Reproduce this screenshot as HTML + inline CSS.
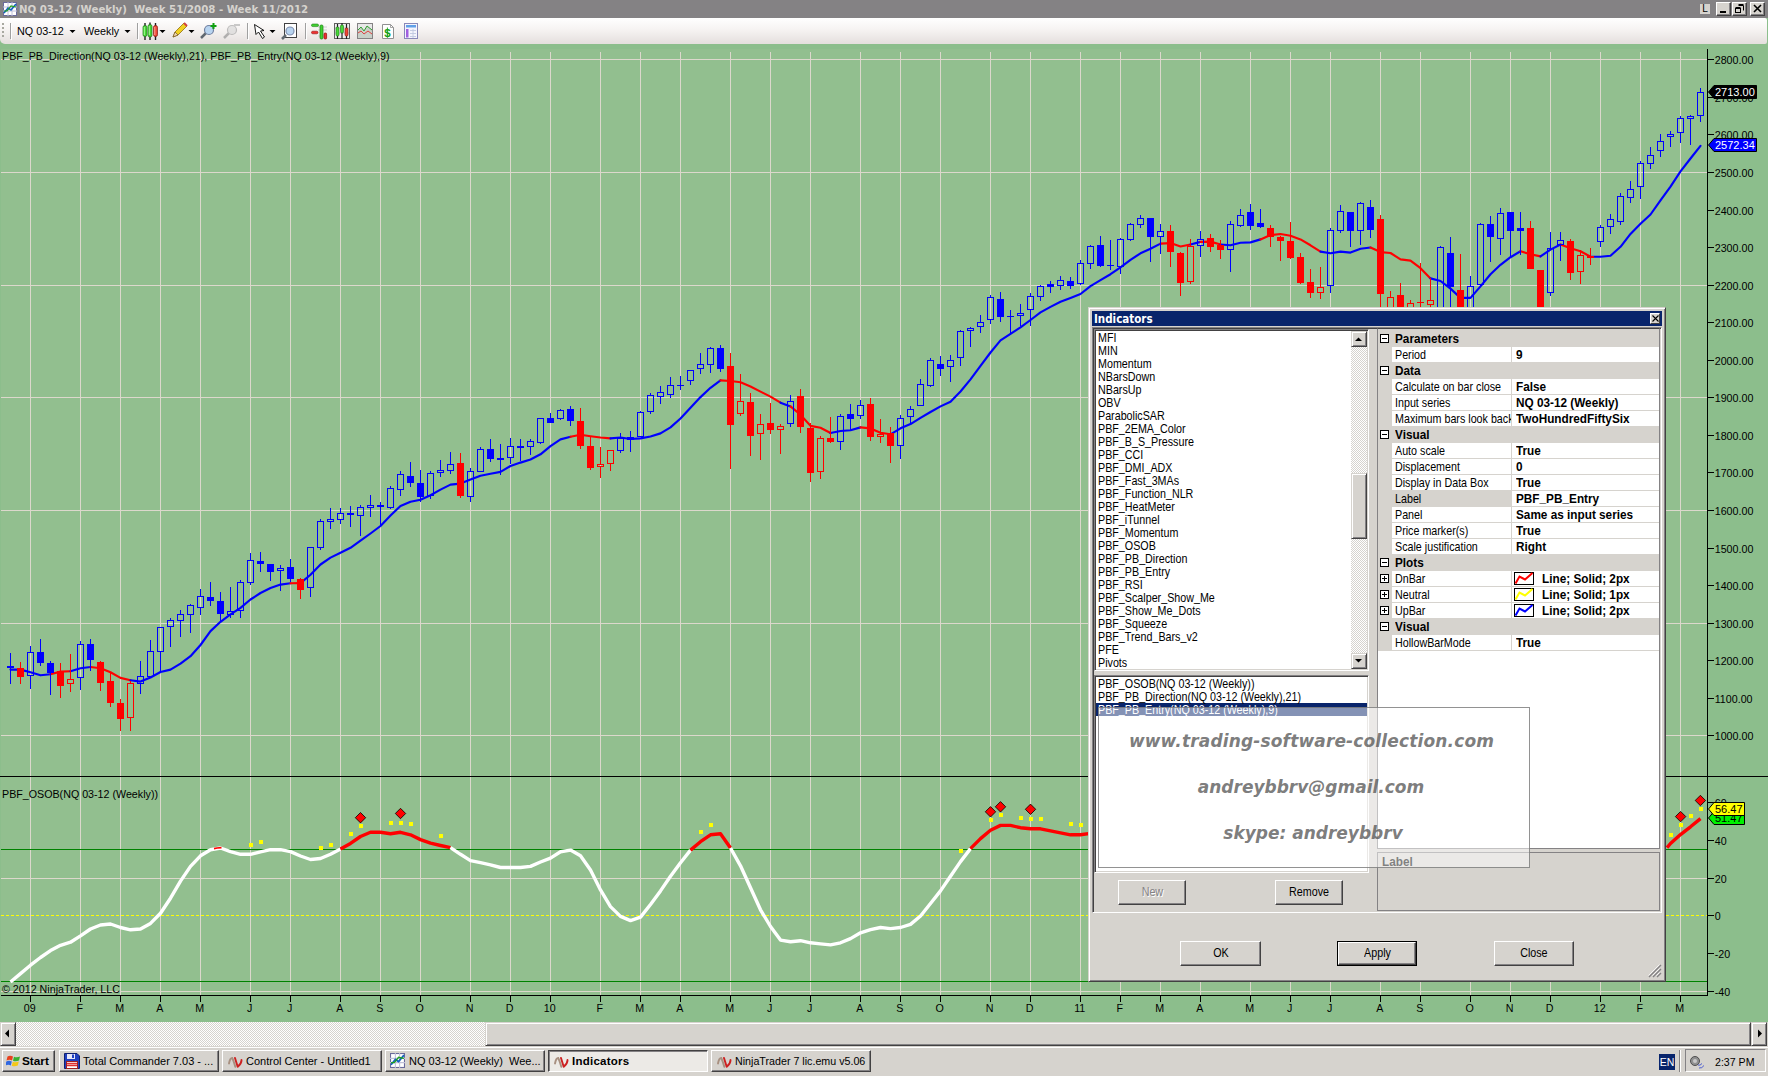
<!DOCTYPE html>
<html><head><meta charset="utf-8"><title>NQ 03-12 (Weekly)</title>
<style>
*{box-sizing:border-box;margin:0;padding:0}
html,body{width:1768px;height:1076px;overflow:hidden;background:#8cbe8c;font-family:"Liberation Sans",sans-serif;font-size:11px;color:#000}
.abs{position:absolute}
#title{left:0;top:0;width:1768px;height:18px;background:#848284}
#title .t{left:19px;top:2px;font:bold 11.35px "DejaVu Sans Condensed","DejaVu Sans","Liberation Sans",sans-serif;color:#d6d3ce;white-space:pre;line-height:15px}
#toolbar{left:0;top:18px;width:1767px;height:26px;background:linear-gradient(#ffffff 0%,#f6f3f2 45%,#e4dfdd 100%);border-radius:0 2px 2px 5px;}
#chartbg{left:1px;top:49px;width:1706px;height:946px;background:#92bf8f}
.btn3d{background:#d6d3ce;border:1px solid;border-color:#fff #424142 #424142 #fff;box-shadow:inset -1px -1px 0 #848284, inset 1px 1px 0 #d6d3ce}
.sb3d{background:#d6d3ce;border:1px solid;border-color:#d6d3ce #424142 #424142 #d6d3ce;box-shadow:inset 1px 1px 0 #fff, inset -1px -1px 0 #848284}
.chk{background:conic-gradient(#fff 25%,#d6d3ce 0 50%,#fff 0 75%,#d6d3ce 0) 0 0/2px 2px}
#scroll{left:0;top:1022px;width:1768px;height:25px;background:#d6d3ce}
#taskbar{left:0;top:1047px;width:1768px;height:29px;background:#d6d3ce;border-top:1px solid #fff}
.tb{position:absolute;top:2px;height:22px;white-space:pre;background:#d6d3ce;border:1px solid;border-color:#fff #424142 #424142 #fff;box-shadow:inset -1px -1px 0 #848284;font:11px "Liberation Sans",sans-serif;line-height:20px;overflow:hidden;padding-left:23px}
.tb.act{border-color:#424142 #fff #fff #424142;box-shadow:inset 1px 1px 0 #848284;background:#eceae6;font-weight:bold}
</style></head><body>
<style>
.lst{font:12.4px "Liberation Sans",sans-serif;line-height:13px;white-space:nowrap;transform:scaleX(0.865);transform-origin:0 0}
.lst div{height:13px}
.pg{font:12.4px "Liberation Sans",sans-serif;line-height:17px;white-space:nowrap;transform:scaleX(0.865);transform-origin:0 0}
.pg.b,.b{font-weight:bold;transform:scaleX(0.95);transform-origin:0 0}
.u{position:relative;top:-1px}
.wm{font:italic bold 17px "DejaVu Sans","Liberation Sans",sans-serif;color:rgba(90,90,90,0.8);text-align:center;white-space:nowrap;line-height:22px}
</style><div id="title" class="abs">
<svg class="abs" style="left:3px;top:2px" width="14" height="14" viewBox="0 0 14 14"><rect x="0.5" y="0.5" width="13" height="13" fill="#fff" stroke="#6a6a9a"/><path d="M0 5H14M0 9H14M5 0V14M9 0V14" stroke="#c0c0d8" stroke-width="1"/><path d="M1 11L5 6L8 8L13 2" stroke="#1060c0" stroke-width="1.6" fill="none"/><path d="M1 9L4 9L8 4L13 5" stroke="#20a020" stroke-width="1.2" fill="none"/></svg>
<div class="abs t">NQ 03-12 (Weekly)  Week 51/2008 - Week 11/2012</div>
<div class="abs" style="left:1700px;top:4px;width:10px;height:10px;background:#d6d3ce;font:10px 'Liberation Sans',sans-serif;line-height:10px;text-align:center">L</div>
<div class="abs btn3d" style="left:1716px;top:2px;width:15px;height:14px"><div class="abs" style="left:3px;top:8px;width:6px;height:2px;background:#000"></div></div>
<div class="abs btn3d" style="left:1732px;top:2px;width:15px;height:14px"><svg class="abs" style="left:1px;top:0px" width="11" height="11" viewBox="0 0 11 11"><path d="M4.5 2.5H9.5V7.5M4.5 1.5H9.5" stroke="#000" fill="none"/><rect x="1.5" y="5.5" width="5" height="4" fill="none" stroke="#000"/><path d="M1.5 4.5H6.5" stroke="#000"/></svg></div>
<div class="abs btn3d" style="left:1750px;top:2px;width:15px;height:14px"><svg class="abs" style="left:2px;top:1px" width="9" height="9" viewBox="0 0 9 9"><path d="M1 1L8 8M8 1L1 8" stroke="#000" stroke-width="1.6"/></svg></div>
</div>
<div id="toolbar" class="abs">
<svg class="abs" style="left:0;top:0" width="430" height="26" viewBox="0 18 430 26" font-family="Liberation Sans, sans-serif" font-size="11px">
<g fill="#a8a8a0"><rect x="2" y="23" width="2" height="2"/><rect x="2" y="27" width="2" height="2"/><rect x="2" y="31" width="2" height="2"/><rect x="2" y="35" width="2" height="2"/></g>
<g fill="#a0a0a0"><rect x="10" y="23" width="1" height="16"/><rect x="137" y="23" width="1" height="16"/><rect x="247" y="23" width="1" height="16"/><rect x="305" y="23" width="1" height="16"/></g><g fill="#ffffff"><rect x="11" y="24" width="1" height="16"/><rect x="138" y="24" width="1" height="16"/><rect x="248" y="24" width="1" height="16"/><rect x="306" y="24" width="1" height="16"/></g>
<text x="17" y="35" font-size="10.8px">NQ 03-12</text>
<path d="M69.5 30H75.5L72.5 33Z" fill="#000"/>
<text x="84" y="35" font-size="10.8px">Weekly</text>
<path d="M124.500 30H130.500L127.500 33Z" fill="#000"/>
<!-- candles icon -->
<g><path d="M145 23V40M150 22.500V40M155.500 23V40" stroke="#202020" stroke-width="1.400"/><rect x="143" y="25.500" width="4" height="11" rx="1.800" fill="#48d838" stroke="#207018" stroke-width="0.700"/><rect x="148" y="24.500" width="4" height="12.500" rx="1.800" fill="#48d838" stroke="#207018" stroke-width="0.700"/><rect x="153.500" y="25.500" width="4" height="11" rx="1.800" fill="#f04838" stroke="#801810" stroke-width="0.700"/><path d="M144.300 27V35M149.300 26V35" stroke="#b0ffa0" stroke-width="0.900"/><path d="M154.800 27V35" stroke="#ffb0a0" stroke-width="0.900"/></g>
<path d="M159.500 30H165.500L162.500 33Z" fill="#000"/>
<!-- pencil -->
<g><path d="M173 37L175 32L184 23L187 26L178 35Z" fill="#f0d020" stroke="#907010" stroke-width="0.8"/><path d="M173 37L175 32L178 35Z" fill="#f0d8b0" stroke="#604010" stroke-width="0.6"/><path d="M184 23L187 26" stroke="#d04040" stroke-width="2"/></g>
<path d="M188.500 30H194.500L191.500 33Z" fill="#000"/>
<!-- zoom + -->
<g><path d="M201 38L206 33" stroke="#606870" stroke-width="2.500"/><circle cx="209" cy="30" r="4.500" fill="#b8d4f0" stroke="#7080a0" stroke-width="1.200"/><path d="M213.500 23V29M210.500 26H216.500" stroke="#10a010" stroke-width="2"/></g>
<!-- zoom - grey -->
<g opacity="0.65"><path d="M224 38L229 33" stroke="#909090" stroke-width="2.500"/><circle cx="232" cy="30" r="4.500" fill="#d8d8d8" stroke="#a0a0a0" stroke-width="1.200"/><path d="M234 25H240" stroke="#b0b0b0" stroke-width="2"/></g>
<!-- cursor -->
<path d="M254.500 24.500L256 34.500L258.500 32L262.500 38.500L264.500 37L260.500 31L264 30.500Z" fill="#fff" stroke="#000" stroke-width="0.900" stroke-linejoin="miter"/>
<path d="M269.500 30H275.500L272.500 33Z" fill="#000"/>
<!-- magnifier box -->
<g><rect x="284.500" y="23.500" width="12" height="14" fill="#fff" stroke="#424142" stroke-width="1"/><path d="M282 39L286 35" stroke="#606870" stroke-width="2.500"/><circle cx="290" cy="31" r="4" fill="#b8d4f0" stroke="#8090b0" stroke-width="1.200"/></g>
<!-- red-green bars -->
<g><path d="M318 27H327M318 30H327M318 36H327" stroke="#d0d0d0" stroke-width="1"/><rect x="311.500" y="24" width="7" height="2.600" rx="1.300" fill="#40d030" stroke="#208018" stroke-width="0.600"/><rect x="311.500" y="31.200" width="6.500" height="2.600" rx="1.300" fill="#f03030" stroke="#901010" stroke-width="0.600"/><rect x="320" y="25" width="3" height="14" rx="1.200" fill="#40d030" stroke="#208018" stroke-width="0.700"/><rect x="324" y="33" width="2.600" height="6" rx="1" fill="#f03030" stroke="#901010" stroke-width="0.700"/></g>
<!-- candles in box -->
<g><rect x="334.500" y="23.500" width="15" height="15" fill="#f0f0f0" stroke="#606060"/><path d="M335 28H349M335 33H349" stroke="#c8c8c8"/><path d="M337.500 24V39M342 23V39M346.500 24V39" stroke="#202020" stroke-width="1.200"/><rect x="336" y="27" width="3" height="9" rx="1.200" fill="#48d838" stroke="#207018" stroke-width="0.600"/><rect x="340.500" y="25" width="3" height="8" rx="1.200" fill="#48d838" stroke="#207018" stroke-width="0.600"/><rect x="345" y="28" width="3" height="8" rx="1.200" fill="#f04838" stroke="#801810" stroke-width="0.600"/></g>
<!-- chart lines -->
<g><rect x="357.500" y="23.500" width="15" height="15" fill="#e8e8e8" stroke="#848284"/><path d="M358 38L358 30L361 27L364 31L367 26L372 30L372 38Z" fill="#c8d0c8"/><path d="M358 30L361 27L364 31L367 26L372 30" stroke="#30a030" fill="none"/><path d="M358 33L361 31L364 34L368 31L372 34" stroke="#e04040" fill="none"/></g>
<!-- $ sheet -->
<g><path d="M382.500 24.500H390.500L393.500 27.500V38.500H382.500Z" fill="#fff" stroke="#909090"/><path d="M390.500 24.500V27.500H393.500" fill="none" stroke="#909090" stroke-width="0.800"/><text x="384.200" y="36.500" font-family="Liberation Sans, sans-serif" font-size="11.500px" font-weight="bold" fill="#18a018">$</text><path d="M387.400 27.500V37.500" stroke="#18a018" stroke-width="0.900"/></g>
<!-- purple table -->
<g><rect x="404.500" y="23.500" width="13" height="15" fill="#f4f4fc" stroke="#8888b8"/><rect x="406" y="25" width="10" height="2.500" fill="#60a0e8"/><rect x="406" y="29" width="2.500" height="8.500" fill="#a060e0"/><path d="M410 30.500H416M410 33.500H416M410 36.500H416M413 29V38" stroke="#c0c8e0" stroke-width="0.900"/></g>
</svg>
</div>
<div id="chartbg" class="abs"></div>
<svg class="abs" style="left:0;top:0" width="1768" height="1076" viewBox="0 0 1768 1076">
<g shape-rendering="crispEdges"><rect x="30" y="52" width="1" height="943" fill="#dcd8cc"/><rect x="80" y="52" width="1" height="943" fill="#dcd8cc"/><rect x="120" y="52" width="1" height="943" fill="#dcd8cc"/><rect x="160" y="52" width="1" height="943" fill="#dcd8cc"/><rect x="200" y="52" width="1" height="943" fill="#dcd8cc"/><rect x="250" y="52" width="1" height="943" fill="#dcd8cc"/><rect x="290" y="52" width="1" height="943" fill="#dcd8cc"/><rect x="340" y="52" width="1" height="943" fill="#dcd8cc"/><rect x="380" y="52" width="1" height="943" fill="#dcd8cc"/><rect x="420" y="52" width="1" height="943" fill="#dcd8cc"/><rect x="470" y="52" width="1" height="943" fill="#dcd8cc"/><rect x="510" y="52" width="1" height="943" fill="#dcd8cc"/><rect x="550" y="52" width="1" height="943" fill="#dcd8cc"/><rect x="600" y="52" width="1" height="943" fill="#dcd8cc"/><rect x="640" y="52" width="1" height="943" fill="#dcd8cc"/><rect x="680" y="52" width="1" height="943" fill="#dcd8cc"/><rect x="730" y="52" width="1" height="943" fill="#dcd8cc"/><rect x="770" y="52" width="1" height="943" fill="#dcd8cc"/><rect x="810" y="52" width="1" height="943" fill="#dcd8cc"/><rect x="860" y="52" width="1" height="943" fill="#dcd8cc"/><rect x="900" y="52" width="1" height="943" fill="#dcd8cc"/><rect x="940" y="52" width="1" height="943" fill="#dcd8cc"/><rect x="990" y="52" width="1" height="943" fill="#dcd8cc"/><rect x="1030" y="52" width="1" height="943" fill="#dcd8cc"/><rect x="1080" y="52" width="1" height="943" fill="#dcd8cc"/><rect x="1120" y="52" width="1" height="943" fill="#dcd8cc"/><rect x="1160" y="52" width="1" height="943" fill="#dcd8cc"/><rect x="1200" y="52" width="1" height="943" fill="#dcd8cc"/><rect x="1250" y="52" width="1" height="943" fill="#dcd8cc"/><rect x="1290" y="52" width="1" height="943" fill="#dcd8cc"/><rect x="1330" y="52" width="1" height="943" fill="#dcd8cc"/><rect x="1380" y="52" width="1" height="943" fill="#dcd8cc"/><rect x="1420" y="52" width="1" height="943" fill="#dcd8cc"/><rect x="1470" y="52" width="1" height="943" fill="#dcd8cc"/><rect x="1510" y="52" width="1" height="943" fill="#dcd8cc"/><rect x="1550" y="52" width="1" height="943" fill="#dcd8cc"/><rect x="1600" y="52" width="1" height="943" fill="#dcd8cc"/><rect x="1640" y="52" width="1" height="943" fill="#dcd8cc"/><rect x="1680" y="52" width="1" height="943" fill="#dcd8cc"/><rect x="1" y="59" width="1706" height="1" fill="#dcd8cc"/><rect x="1" y="172" width="1706" height="1" fill="#dcd8cc"/><rect x="1" y="285" width="1706" height="1" fill="#dcd8cc"/><rect x="1" y="397" width="1706" height="1" fill="#dcd8cc"/><rect x="1" y="510" width="1706" height="1" fill="#dcd8cc"/><rect x="1" y="623" width="1706" height="1" fill="#dcd8cc"/><rect x="1" y="735" width="1706" height="1" fill="#dcd8cc"/><rect x="1" y="878" width="1706" height="1" fill="#dcd8cc"/><rect x="1" y="991" width="1706" height="1" fill="#dcd8cc"/></g>
<g shape-rendering="crispEdges"><rect x="1" y="849" width="1706" height="1" fill="#008200"/><rect x="1" y="981" width="1706" height="1" fill="#008200"/><line x1="1" y1="915.5" x2="1707" y2="915.5" stroke="#ffff00" stroke-width="1" stroke-dasharray="3,2"/></g>
<polyline points="10.5,669.6 20.5,669.6 30.5,672.3 40.5,675.3 50.5,674.2" fill="none" stroke="#0000ff" stroke-width="2.15" stroke-linejoin="round" stroke-linecap="round"/>
<polyline points="50.5,674.2 60.5,671.6 70.5,671.2" fill="none" stroke="#ff0000" stroke-width="2.15" stroke-linejoin="round" stroke-linecap="round"/>
<polyline points="70.5,671.2 80.5,668.3 90.5,667.0" fill="none" stroke="#0000ff" stroke-width="2.15" stroke-linejoin="round" stroke-linecap="round"/>
<polyline points="90.5,667.0 100.5,668.3 110.5,672.3 120.5,677.9 130.5,680.3" fill="none" stroke="#ff0000" stroke-width="2.15" stroke-linejoin="round" stroke-linecap="round"/>
<polyline points="130.5,680.3 140.5,681.6 150.5,677.5 160.5,672.0 170.5,669.6 180.5,663.6 190.5,656.2 200.5,645.0 210.5,631.1 220.5,621.8 230.5,614.3 240.5,607.8 250.5,599.5 260.5,593.0 270.5,588.0 280.5,584.6 290.5,583.3" fill="none" stroke="#0000ff" stroke-width="2.15" stroke-linejoin="round" stroke-linecap="round"/>
<polyline points="290.5,583.3 300.5,583.1" fill="none" stroke="#ff0000" stroke-width="2.15" stroke-linejoin="round" stroke-linecap="round"/>
<polyline points="300.5,583.1 310.5,574.7 320.5,564.5 330.5,557.6 340.5,552.8 350.5,547.8 360.5,540.7 370.5,533.5 380.5,526.0 390.5,515.6 400.5,505.9 410.5,501.7 420.5,499.8 430.5,495.2 440.5,489.6 450.5,484.6 460.5,483.6 470.5,479.6 480.5,475.8 490.5,473.8 500.5,471.9 510.5,466.0 520.5,462.6 530.5,459.5 540.5,454.3 550.5,446.1 560.5,439.4 570.5,436.8" fill="none" stroke="#0000ff" stroke-width="2.15" stroke-linejoin="round" stroke-linecap="round"/>
<polyline points="570.5,436.8 580.5,434.8 590.5,436.2 600.5,437.5 610.5,438.4" fill="none" stroke="#ff0000" stroke-width="2.15" stroke-linejoin="round" stroke-linecap="round"/>
<polyline points="610.5,438.4 620.5,437.5 630.5,439.0 640.5,438.4 650.5,436.5 660.5,433.4 670.5,427.4 680.5,418.5 690.5,407.7 700.5,397.1 710.5,387.8 720.5,380.4" fill="none" stroke="#0000ff" stroke-width="2.15" stroke-linejoin="round" stroke-linecap="round"/>
<polyline points="720.5,380.4 730.5,381.0 740.5,382.3 750.5,386.5 760.5,391.6 770.5,396.6 780.5,402.7" fill="none" stroke="#ff0000" stroke-width="2.15" stroke-linejoin="round" stroke-linecap="round"/>
<polyline points="780.5,402.7 790.5,406.4" fill="none" stroke="#0000ff" stroke-width="2.15" stroke-linejoin="round" stroke-linecap="round"/>
<polyline points="790.5,406.4 800.5,414.8 810.5,425.9 820.5,427.8 830.5,433.0" fill="none" stroke="#ff0000" stroke-width="2.15" stroke-linejoin="round" stroke-linecap="round"/>
<polyline points="830.5,433.0 840.5,431.0 850.5,430.2 860.5,427.4" fill="none" stroke="#0000ff" stroke-width="2.15" stroke-linejoin="round" stroke-linecap="round"/>
<polyline points="860.5,427.4 870.5,428.4 880.5,432.8 890.5,434.3" fill="none" stroke="#ff0000" stroke-width="2.15" stroke-linejoin="round" stroke-linecap="round"/>
<polyline points="890.5,434.3 900.5,428.3 910.5,424.1 920.5,417.9 930.5,412.0 940.5,406.4 950.5,401.7 960.5,391.5 970.5,379.4 980.5,365.9 990.5,352.5 1000.5,340.4 1010.5,333.9 1020.5,327.4 1030.5,320.0 1040.5,312.4 1050.5,306.9 1060.5,301.8 1070.5,297.9 1080.5,294.0 1090.5,286.1 1100.5,280.1 1110.5,274.2 1120.5,267.4 1130.5,259.8 1140.5,253.3 1150.5,248.7 1160.5,243.6" fill="none" stroke="#0000ff" stroke-width="2.15" stroke-linejoin="round" stroke-linecap="round"/>
<polyline points="1160.5,243.6 1170.5,243.1 1180.5,246.5 1190.5,244.5" fill="none" stroke="#ff0000" stroke-width="2.15" stroke-linejoin="round" stroke-linecap="round"/>
<polyline points="1190.5,244.5 1200.5,241.9" fill="none" stroke="#0000ff" stroke-width="2.15" stroke-linejoin="round" stroke-linecap="round"/>
<polyline points="1200.5,241.9 1210.5,241.6 1220.5,244.5" fill="none" stroke="#ff0000" stroke-width="2.15" stroke-linejoin="round" stroke-linecap="round"/>
<polyline points="1220.5,244.5 1230.5,245.3 1240.5,242.8 1250.5,242.4 1260.5,239.4" fill="none" stroke="#0000ff" stroke-width="2.15" stroke-linejoin="round" stroke-linecap="round"/>
<polyline points="1260.5,239.4 1270.5,235.1 1280.5,234.0 1290.5,235.7 1300.5,239.4 1310.5,245.3 1320.5,251.6" fill="none" stroke="#ff0000" stroke-width="2.15" stroke-linejoin="round" stroke-linecap="round"/>
<polyline points="1320.5,251.6 1330.5,253.3 1340.5,251.6 1350.5,252.6 1360.5,248.7 1370.5,247.5" fill="none" stroke="#0000ff" stroke-width="2.15" stroke-linejoin="round" stroke-linecap="round"/>
<polyline points="1370.5,247.5 1380.5,252.1 1390.5,253.0 1400.5,259.4 1410.5,260.6 1420.5,268.2 1430.5,278.4" fill="none" stroke="#ff0000" stroke-width="2.15" stroke-linejoin="round" stroke-linecap="round"/>
<polyline points="1430.5,278.4 1440.5,281.0 1450.5,288.6 1460.5,297.9 1470.5,297.9 1480.5,286.4 1490.5,274.2 1500.5,264.8 1510.5,257.2 1520.5,251.3" fill="none" stroke="#0000ff" stroke-width="2.15" stroke-linejoin="round" stroke-linecap="round"/>
<polyline points="1520.5,251.3 1530.5,254.3 1540.5,256.4" fill="none" stroke="#ff0000" stroke-width="2.15" stroke-linejoin="round" stroke-linecap="round"/>
<polyline points="1540.5,256.4 1550.5,249.6 1560.5,244.5" fill="none" stroke="#0000ff" stroke-width="2.15" stroke-linejoin="round" stroke-linecap="round"/>
<polyline points="1560.5,244.5 1570.5,248.2 1580.5,251.3 1590.5,256.7" fill="none" stroke="#ff0000" stroke-width="2.15" stroke-linejoin="round" stroke-linecap="round"/>
<polyline points="1590.5,256.7 1600.5,256.8 1610.5,255.7 1620.5,246.8 1630.5,233.9 1640.5,223.8 1650.5,214.5 1660.5,200.4 1670.5,186.6 1680.5,171.4 1690.5,158.5 1700.5,145.8" fill="none" stroke="#0000ff" stroke-width="2.15" stroke-linejoin="round" stroke-linecap="round"/>
<g shape-rendering="crispEdges"><rect x="10" y="653" width="1" height="31" fill="#0000ff"/><rect x="7" y="666" width="7" height="2" fill="#0000ff"/><rect x="20" y="662" width="1" height="22" fill="#ff0000"/><rect x="17" y="668" width="7" height="9" fill="#ff0000"/><rect x="30" y="646" width="1" height="6" fill="#0000ff"/><rect x="30" y="676" width="1" height="13" fill="#0000ff"/><rect x="27.5" y="652.5" width="6" height="23" fill="none" stroke="#0000ff" stroke-width="1"/><rect x="40" y="639" width="1" height="27" fill="#0000ff"/><rect x="37" y="652" width="7" height="11" fill="#0000ff"/><rect x="50" y="661" width="1" height="34" fill="#0000ff"/><rect x="47" y="663" width="7" height="10" fill="#0000ff"/><rect x="60" y="663" width="1" height="35" fill="#ff0000"/><rect x="57" y="671" width="7" height="15" fill="#ff0000"/><rect x="70" y="654" width="1" height="25" fill="#ff0000"/><rect x="70" y="684" width="1" height="8" fill="#ff0000"/><rect x="67.5" y="679.5" width="6" height="4" fill="none" stroke="#ff0000" stroke-width="1"/><rect x="80" y="641" width="1" height="3" fill="#0000ff"/><rect x="80" y="678" width="1" height="12" fill="#0000ff"/><rect x="77.5" y="644.5" width="6" height="33" fill="none" stroke="#0000ff" stroke-width="1"/><rect x="90" y="639" width="1" height="32" fill="#0000ff"/><rect x="87" y="644" width="7" height="16" fill="#0000ff"/><rect x="100" y="661" width="1" height="30" fill="#ff0000"/><rect x="97" y="662" width="7" height="21" fill="#ff0000"/><rect x="110" y="673" width="1" height="34" fill="#ff0000"/><rect x="107" y="681" width="7" height="22" fill="#ff0000"/><rect x="120" y="699" width="1" height="32" fill="#ff0000"/><rect x="117" y="703" width="7" height="16" fill="#ff0000"/><rect x="130" y="681" width="1" height="2" fill="#ff0000"/><rect x="130" y="718" width="1" height="13" fill="#ff0000"/><rect x="127.5" y="683.5" width="6" height="34" fill="none" stroke="#ff0000" stroke-width="1"/><rect x="140" y="661" width="1" height="15" fill="#0000ff"/><rect x="140" y="684" width="1" height="10" fill="#0000ff"/><rect x="137.5" y="676.5" width="6" height="7" fill="none" stroke="#0000ff" stroke-width="1"/><rect x="150" y="640" width="1" height="11" fill="#0000ff"/><rect x="150" y="677" width="1" height="1" fill="#0000ff"/><rect x="147.5" y="651.5" width="6" height="25" fill="none" stroke="#0000ff" stroke-width="1"/><rect x="160" y="652" width="1" height="20" fill="#0000ff"/><rect x="157.5" y="627.5" width="6" height="24" fill="none" stroke="#0000ff" stroke-width="1"/><rect x="170" y="618" width="1" height="2" fill="#0000ff"/><rect x="170" y="627" width="1" height="20" fill="#0000ff"/><rect x="167.5" y="620.5" width="6" height="6" fill="none" stroke="#0000ff" stroke-width="1"/><rect x="180" y="610" width="1" height="4" fill="#0000ff"/><rect x="180" y="621" width="1" height="16" fill="#0000ff"/><rect x="177.5" y="614.5" width="6" height="6" fill="none" stroke="#0000ff" stroke-width="1"/><rect x="190" y="604" width="1" height="1" fill="#0000ff"/><rect x="190" y="615" width="1" height="18" fill="#0000ff"/><rect x="187.5" y="605.5" width="6" height="9" fill="none" stroke="#0000ff" stroke-width="1"/><rect x="200" y="589" width="1" height="7" fill="#0000ff"/><rect x="200" y="608" width="1" height="7" fill="#0000ff"/><rect x="197.5" y="596.5" width="6" height="11" fill="none" stroke="#0000ff" stroke-width="1"/><rect x="210" y="582" width="1" height="24" fill="#0000ff"/><rect x="207" y="597" width="7" height="4" fill="#0000ff"/><rect x="220" y="592" width="1" height="29" fill="#0000ff"/><rect x="217" y="601" width="7" height="13" fill="#0000ff"/><rect x="230" y="587" width="1" height="24" fill="#0000ff"/><rect x="230" y="615" width="1" height="3" fill="#0000ff"/><rect x="227.5" y="611.5" width="6" height="3" fill="none" stroke="#0000ff" stroke-width="1"/><rect x="240" y="580" width="1" height="2" fill="#0000ff"/><rect x="240" y="611" width="1" height="7" fill="#0000ff"/><rect x="237.5" y="582.5" width="6" height="28" fill="none" stroke="#0000ff" stroke-width="1"/><rect x="250" y="553" width="1" height="7" fill="#0000ff"/><rect x="250" y="583" width="1" height="2" fill="#0000ff"/><rect x="247.5" y="560.5" width="6" height="22" fill="none" stroke="#0000ff" stroke-width="1"/><rect x="260" y="552" width="1" height="20" fill="#0000ff"/><rect x="257" y="561" width="7" height="3" fill="#0000ff"/><rect x="270" y="564" width="1" height="17" fill="#0000ff"/><rect x="267" y="564" width="7" height="8" fill="#0000ff"/><rect x="280" y="565" width="1" height="3" fill="#0000ff"/><rect x="280" y="571" width="1" height="20" fill="#0000ff"/><rect x="277.5" y="568.5" width="6" height="2" fill="none" stroke="#0000ff" stroke-width="1"/><rect x="290" y="559" width="1" height="23" fill="#0000ff"/><rect x="287" y="567" width="7" height="12" fill="#0000ff"/><rect x="300" y="578" width="1" height="21" fill="#ff0000"/><rect x="297" y="579" width="7" height="11" fill="#ff0000"/><rect x="310" y="588" width="1" height="9" fill="#0000ff"/><rect x="307.5" y="547.5" width="6" height="40" fill="none" stroke="#0000ff" stroke-width="1"/><rect x="320" y="519" width="1" height="2" fill="#0000ff"/><rect x="320" y="548" width="1" height="2" fill="#0000ff"/><rect x="317.5" y="521.5" width="6" height="26" fill="none" stroke="#0000ff" stroke-width="1"/><rect x="330" y="508" width="1" height="11" fill="#0000ff"/><rect x="330" y="522" width="1" height="7" fill="#0000ff"/><rect x="327.5" y="519.5" width="6" height="2" fill="none" stroke="#0000ff" stroke-width="1"/><rect x="340" y="508" width="1" height="5" fill="#0000ff"/><rect x="340" y="520" width="1" height="4" fill="#0000ff"/><rect x="337.5" y="513.5" width="6" height="6" fill="none" stroke="#0000ff" stroke-width="1"/><rect x="350" y="506" width="1" height="21" fill="#0000ff"/><rect x="347" y="513" width="7" height="2" fill="#0000ff"/><rect x="360" y="505" width="1" height="2" fill="#0000ff"/><rect x="360" y="516" width="1" height="20" fill="#0000ff"/><rect x="357.5" y="507.5" width="6" height="8" fill="none" stroke="#0000ff" stroke-width="1"/><rect x="370" y="495" width="1" height="10" fill="#0000ff"/><rect x="370" y="508" width="1" height="9" fill="#0000ff"/><rect x="367.5" y="505.5" width="6" height="2" fill="none" stroke="#0000ff" stroke-width="1"/><rect x="380" y="502" width="1" height="23" fill="#0000ff"/><rect x="377" y="505" width="7" height="2" fill="#0000ff"/><rect x="390" y="486" width="1" height="2" fill="#0000ff"/><rect x="390" y="508" width="1" height="1" fill="#0000ff"/><rect x="387.5" y="488.5" width="6" height="19" fill="none" stroke="#0000ff" stroke-width="1"/><rect x="400" y="471" width="1" height="3" fill="#0000ff"/><rect x="400" y="490" width="1" height="6" fill="#0000ff"/><rect x="397.5" y="474.5" width="6" height="15" fill="none" stroke="#0000ff" stroke-width="1"/><rect x="410" y="462" width="1" height="25" fill="#0000ff"/><rect x="407" y="476" width="7" height="7" fill="#0000ff"/><rect x="420" y="470" width="1" height="32" fill="#0000ff"/><rect x="417" y="483" width="7" height="14" fill="#0000ff"/><rect x="430" y="471" width="1" height="2" fill="#0000ff"/><rect x="430" y="496" width="1" height="3" fill="#0000ff"/><rect x="427.5" y="473.5" width="6" height="22" fill="none" stroke="#0000ff" stroke-width="1"/><rect x="440" y="460" width="1" height="10" fill="#0000ff"/><rect x="440" y="473" width="1" height="4" fill="#0000ff"/><rect x="437.5" y="470.5" width="6" height="2" fill="none" stroke="#0000ff" stroke-width="1"/><rect x="450" y="452" width="1" height="12" fill="#0000ff"/><rect x="450" y="471" width="1" height="3" fill="#0000ff"/><rect x="447.5" y="464.5" width="6" height="6" fill="none" stroke="#0000ff" stroke-width="1"/><rect x="460" y="453" width="1" height="45" fill="#ff0000"/><rect x="457" y="463" width="7" height="33" fill="#ff0000"/><rect x="470" y="468" width="1" height="3" fill="#0000ff"/><rect x="470" y="497" width="1" height="5" fill="#0000ff"/><rect x="467.5" y="471.5" width="6" height="25" fill="none" stroke="#0000ff" stroke-width="1"/><rect x="480" y="447" width="1" height="2" fill="#0000ff"/><rect x="477.5" y="449.5" width="6" height="22" fill="none" stroke="#0000ff" stroke-width="1"/><rect x="490" y="439" width="1" height="23" fill="#0000ff"/><rect x="487" y="449" width="7" height="10" fill="#0000ff"/><rect x="500" y="444" width="1" height="31" fill="#0000ff"/><rect x="497" y="458" width="7" height="2" fill="#0000ff"/><rect x="510" y="438" width="1" height="8" fill="#0000ff"/><rect x="510" y="458" width="1" height="6" fill="#0000ff"/><rect x="507.5" y="446.5" width="6" height="11" fill="none" stroke="#0000ff" stroke-width="1"/><rect x="520" y="439" width="1" height="22" fill="#0000ff"/><rect x="517" y="446" width="7" height="2" fill="#0000ff"/><rect x="530" y="439" width="1" height="2" fill="#0000ff"/><rect x="530" y="447" width="1" height="8" fill="#0000ff"/><rect x="527.5" y="441.5" width="6" height="5" fill="none" stroke="#0000ff" stroke-width="1"/><rect x="540" y="443" width="1" height="1" fill="#0000ff"/><rect x="537.5" y="418.5" width="6" height="24" fill="none" stroke="#0000ff" stroke-width="1"/><rect x="550" y="413" width="1" height="10" fill="#0000ff"/><rect x="547" y="418" width="7" height="5" fill="#0000ff"/><rect x="560" y="409" width="1" height="1" fill="#0000ff"/><rect x="560" y="419" width="1" height="1" fill="#0000ff"/><rect x="557.5" y="410.5" width="6" height="8" fill="none" stroke="#0000ff" stroke-width="1"/><rect x="570" y="406" width="1" height="20" fill="#0000ff"/><rect x="567" y="409" width="7" height="12" fill="#0000ff"/><rect x="580" y="408" width="1" height="41" fill="#ff0000"/><rect x="577" y="421" width="7" height="25" fill="#ff0000"/><rect x="590" y="436" width="1" height="34" fill="#ff0000"/><rect x="587" y="446" width="7" height="22" fill="#ff0000"/><rect x="600" y="447" width="1" height="17" fill="#ff0000"/><rect x="600" y="467" width="1" height="11" fill="#ff0000"/><rect x="597.5" y="464.5" width="6" height="2" fill="none" stroke="#ff0000" stroke-width="1"/><rect x="610" y="464" width="1" height="7" fill="#ff0000"/><rect x="607.5" y="450.5" width="6" height="13" fill="none" stroke="#ff0000" stroke-width="1"/><rect x="620" y="433" width="1" height="5" fill="#0000ff"/><rect x="620" y="451" width="1" height="2" fill="#0000ff"/><rect x="617.5" y="438.5" width="6" height="12" fill="none" stroke="#0000ff" stroke-width="1"/><rect x="630" y="431" width="1" height="6" fill="#0000ff"/><rect x="630" y="440" width="1" height="12" fill="#0000ff"/><rect x="627.5" y="437.5" width="6" height="2" fill="none" stroke="#0000ff" stroke-width="1"/><rect x="640" y="411" width="1" height="1" fill="#0000ff"/><rect x="637.5" y="412.5" width="6" height="24" fill="none" stroke="#0000ff" stroke-width="1"/><rect x="650" y="393" width="1" height="2" fill="#0000ff"/><rect x="650" y="412" width="1" height="2" fill="#0000ff"/><rect x="647.5" y="395.5" width="6" height="16" fill="none" stroke="#0000ff" stroke-width="1"/><rect x="660" y="386" width="1" height="6" fill="#0000ff"/><rect x="660" y="397" width="1" height="7" fill="#0000ff"/><rect x="657.5" y="392.5" width="6" height="4" fill="none" stroke="#0000ff" stroke-width="1"/><rect x="670" y="377" width="1" height="8" fill="#0000ff"/><rect x="670" y="395" width="1" height="3" fill="#0000ff"/><rect x="667.5" y="385.5" width="6" height="9" fill="none" stroke="#0000ff" stroke-width="1"/><rect x="680" y="376" width="1" height="14" fill="#0000ff"/><rect x="677" y="385" width="7" height="1" fill="#0000ff"/><rect x="690" y="381" width="1" height="4" fill="#0000ff"/><rect x="687.5" y="370.5" width="6" height="10" fill="none" stroke="#0000ff" stroke-width="1"/><rect x="700" y="353" width="1" height="11" fill="#0000ff"/><rect x="700" y="369" width="1" height="5" fill="#0000ff"/><rect x="697.5" y="364.5" width="6" height="4" fill="none" stroke="#0000ff" stroke-width="1"/><rect x="710" y="347" width="1" height="1" fill="#0000ff"/><rect x="710" y="365" width="1" height="8" fill="#0000ff"/><rect x="707.5" y="348.5" width="6" height="16" fill="none" stroke="#0000ff" stroke-width="1"/><rect x="720" y="345" width="1" height="27" fill="#0000ff"/><rect x="717" y="348" width="7" height="21" fill="#0000ff"/><rect x="730" y="353" width="1" height="116" fill="#ff0000"/><rect x="727" y="366" width="7" height="59" fill="#ff0000"/><rect x="740" y="374" width="1" height="27" fill="#ff0000"/><rect x="740" y="414" width="1" height="2" fill="#ff0000"/><rect x="737.5" y="401.5" width="6" height="12" fill="none" stroke="#ff0000" stroke-width="1"/><rect x="750" y="393" width="1" height="63" fill="#ff0000"/><rect x="747" y="402" width="7" height="34" fill="#ff0000"/><rect x="760" y="414" width="1" height="10" fill="#ff0000"/><rect x="760" y="434" width="1" height="26" fill="#ff0000"/><rect x="757.5" y="424.5" width="6" height="9" fill="none" stroke="#ff0000" stroke-width="1"/><rect x="770" y="403" width="1" height="31" fill="#ff0000"/><rect x="767" y="423" width="7" height="7" fill="#ff0000"/><rect x="780" y="424" width="1" height="2" fill="#ff0000"/><rect x="780" y="430" width="1" height="24" fill="#ff0000"/><rect x="777.5" y="426.5" width="6" height="3" fill="none" stroke="#ff0000" stroke-width="1"/><rect x="790" y="395" width="1" height="6" fill="#0000ff"/><rect x="790" y="424" width="1" height="3" fill="#0000ff"/><rect x="787.5" y="401.5" width="6" height="22" fill="none" stroke="#0000ff" stroke-width="1"/><rect x="800" y="389" width="1" height="44" fill="#ff0000"/><rect x="797" y="396" width="7" height="31" fill="#ff0000"/><rect x="810" y="423" width="1" height="59" fill="#ff0000"/><rect x="807" y="428" width="7" height="45" fill="#ff0000"/><rect x="820" y="436" width="1" height="2" fill="#ff0000"/><rect x="820" y="472" width="1" height="7" fill="#ff0000"/><rect x="817.5" y="438.5" width="6" height="33" fill="none" stroke="#ff0000" stroke-width="1"/><rect x="830" y="417" width="1" height="26" fill="#ff0000"/><rect x="827" y="438" width="7" height="4" fill="#ff0000"/><rect x="840" y="414" width="1" height="2" fill="#0000ff"/><rect x="840" y="442" width="1" height="8" fill="#0000ff"/><rect x="837.5" y="416.5" width="6" height="25" fill="none" stroke="#0000ff" stroke-width="1"/><rect x="850" y="404" width="1" height="26" fill="#0000ff"/><rect x="847" y="414" width="7" height="5" fill="#0000ff"/><rect x="860" y="400" width="1" height="5" fill="#0000ff"/><rect x="860" y="416" width="1" height="3" fill="#0000ff"/><rect x="857.5" y="405.5" width="6" height="10" fill="none" stroke="#0000ff" stroke-width="1"/><rect x="870" y="398" width="1" height="43" fill="#ff0000"/><rect x="867" y="404" width="7" height="33" fill="#ff0000"/><rect x="880" y="419" width="1" height="15" fill="#ff0000"/><rect x="880" y="437" width="1" height="6" fill="#ff0000"/><rect x="877.5" y="434.5" width="6" height="2" fill="none" stroke="#ff0000" stroke-width="1"/><rect x="890" y="427" width="1" height="36" fill="#ff0000"/><rect x="887" y="433" width="7" height="13" fill="#ff0000"/><rect x="900" y="415" width="1" height="3" fill="#0000ff"/><rect x="900" y="446" width="1" height="13" fill="#0000ff"/><rect x="897.5" y="418.5" width="6" height="27" fill="none" stroke="#0000ff" stroke-width="1"/><rect x="910" y="406" width="1" height="3" fill="#0000ff"/><rect x="910" y="417" width="1" height="6" fill="#0000ff"/><rect x="907.5" y="409.5" width="6" height="7" fill="none" stroke="#0000ff" stroke-width="1"/><rect x="920" y="379" width="1" height="5" fill="#0000ff"/><rect x="917.5" y="384.5" width="6" height="21" fill="none" stroke="#0000ff" stroke-width="1"/><rect x="930" y="358" width="1" height="2" fill="#0000ff"/><rect x="930" y="386" width="1" height="1" fill="#0000ff"/><rect x="927.5" y="360.5" width="6" height="25" fill="none" stroke="#0000ff" stroke-width="1"/><rect x="940" y="356" width="1" height="20" fill="#0000ff"/><rect x="937" y="364" width="7" height="5" fill="#0000ff"/><rect x="950" y="355" width="1" height="5" fill="#0000ff"/><rect x="950" y="367" width="1" height="15" fill="#0000ff"/><rect x="947.5" y="360.5" width="6" height="6" fill="none" stroke="#0000ff" stroke-width="1"/><rect x="960" y="330" width="1" height="1" fill="#0000ff"/><rect x="960" y="358" width="1" height="8" fill="#0000ff"/><rect x="957.5" y="331.5" width="6" height="26" fill="none" stroke="#0000ff" stroke-width="1"/><rect x="970" y="327" width="1" height="1" fill="#0000ff"/><rect x="970" y="331" width="1" height="16" fill="#0000ff"/><rect x="967.5" y="328.5" width="6" height="2" fill="none" stroke="#0000ff" stroke-width="1"/><rect x="980" y="315" width="1" height="7" fill="#0000ff"/><rect x="980" y="327" width="1" height="6" fill="#0000ff"/><rect x="977.5" y="322.5" width="6" height="4" fill="none" stroke="#0000ff" stroke-width="1"/><rect x="990" y="295" width="1" height="2" fill="#0000ff"/><rect x="990" y="320" width="1" height="4" fill="#0000ff"/><rect x="987.5" y="297.5" width="6" height="22" fill="none" stroke="#0000ff" stroke-width="1"/><rect x="1000" y="292" width="1" height="30" fill="#0000ff"/><rect x="997" y="299" width="7" height="18" fill="#0000ff"/><rect x="1010" y="310" width="1" height="25" fill="#0000ff"/><rect x="1007" y="316" width="7" height="1" fill="#0000ff"/><rect x="1020" y="304" width="1" height="9" fill="#0000ff"/><rect x="1020" y="316" width="1" height="10" fill="#0000ff"/><rect x="1017.5" y="313.5" width="6" height="2" fill="none" stroke="#0000ff" stroke-width="1"/><rect x="1030" y="293" width="1" height="3" fill="#0000ff"/><rect x="1030" y="310" width="1" height="16" fill="#0000ff"/><rect x="1027.5" y="296.5" width="6" height="13" fill="none" stroke="#0000ff" stroke-width="1"/><rect x="1040" y="285" width="1" height="1" fill="#0000ff"/><rect x="1040" y="297" width="1" height="4" fill="#0000ff"/><rect x="1037.5" y="286.5" width="6" height="10" fill="none" stroke="#0000ff" stroke-width="1"/><rect x="1050" y="281" width="1" height="12" fill="#0000ff"/><rect x="1047" y="284" width="7" height="3" fill="#0000ff"/><rect x="1060" y="276" width="1" height="4" fill="#0000ff"/><rect x="1060" y="286" width="1" height="4" fill="#0000ff"/><rect x="1057.5" y="280.5" width="6" height="5" fill="none" stroke="#0000ff" stroke-width="1"/><rect x="1070" y="277" width="1" height="12" fill="#0000ff"/><rect x="1067" y="281" width="7" height="5" fill="#0000ff"/><rect x="1080" y="260" width="1" height="3" fill="#0000ff"/><rect x="1080" y="284" width="1" height="1" fill="#0000ff"/><rect x="1077.5" y="263.5" width="6" height="20" fill="none" stroke="#0000ff" stroke-width="1"/><rect x="1090" y="245" width="1" height="1" fill="#0000ff"/><rect x="1090" y="264" width="1" height="5" fill="#0000ff"/><rect x="1087.5" y="246.5" width="6" height="17" fill="none" stroke="#0000ff" stroke-width="1"/><rect x="1100" y="236" width="1" height="31" fill="#0000ff"/><rect x="1097" y="245" width="7" height="21" fill="#0000ff"/><rect x="1110" y="240" width="1" height="30" fill="#0000ff"/><rect x="1107" y="265" width="7" height="1" fill="#0000ff"/><rect x="1120" y="238" width="1" height="1" fill="#0000ff"/><rect x="1120" y="267" width="1" height="7" fill="#0000ff"/><rect x="1117.5" y="239.5" width="6" height="27" fill="none" stroke="#0000ff" stroke-width="1"/><rect x="1130" y="223" width="1" height="1" fill="#0000ff"/><rect x="1130" y="240" width="1" height="1" fill="#0000ff"/><rect x="1127.5" y="224.5" width="6" height="15" fill="none" stroke="#0000ff" stroke-width="1"/><rect x="1140" y="215" width="1" height="3" fill="#0000ff"/><rect x="1140" y="225" width="1" height="3" fill="#0000ff"/><rect x="1137.5" y="218.5" width="6" height="6" fill="none" stroke="#0000ff" stroke-width="1"/><rect x="1150" y="218" width="1" height="44" fill="#0000ff"/><rect x="1147" y="218" width="7" height="19" fill="#0000ff"/><rect x="1160" y="224" width="1" height="7" fill="#0000ff"/><rect x="1160" y="237" width="1" height="17" fill="#0000ff"/><rect x="1157.5" y="231.5" width="6" height="5" fill="none" stroke="#0000ff" stroke-width="1"/><rect x="1170" y="225" width="1" height="42" fill="#ff0000"/><rect x="1167" y="231" width="7" height="21" fill="#ff0000"/><rect x="1180" y="252" width="1" height="44" fill="#ff0000"/><rect x="1177" y="253" width="7" height="30" fill="#ff0000"/><rect x="1190" y="239" width="1" height="7" fill="#ff0000"/><rect x="1190" y="282" width="1" height="2" fill="#ff0000"/><rect x="1187.5" y="246.5" width="6" height="35" fill="none" stroke="#ff0000" stroke-width="1"/><rect x="1200" y="231" width="1" height="8" fill="#0000ff"/><rect x="1200" y="246" width="1" height="11" fill="#0000ff"/><rect x="1197.5" y="239.5" width="6" height="6" fill="none" stroke="#0000ff" stroke-width="1"/><rect x="1210" y="234" width="1" height="18" fill="#ff0000"/><rect x="1207" y="238" width="7" height="9" fill="#ff0000"/><rect x="1220" y="240" width="1" height="19" fill="#ff0000"/><rect x="1217" y="245" width="7" height="5" fill="#ff0000"/><rect x="1230" y="221" width="1" height="3" fill="#0000ff"/><rect x="1230" y="250" width="1" height="22" fill="#0000ff"/><rect x="1227.5" y="224.5" width="6" height="25" fill="none" stroke="#0000ff" stroke-width="1"/><rect x="1240" y="209" width="1" height="6" fill="#0000ff"/><rect x="1240" y="226" width="1" height="1" fill="#0000ff"/><rect x="1237.5" y="215.5" width="6" height="10" fill="none" stroke="#0000ff" stroke-width="1"/><rect x="1250" y="204" width="1" height="26" fill="#0000ff"/><rect x="1247" y="212" width="7" height="14" fill="#0000ff"/><rect x="1260" y="209" width="1" height="19" fill="#0000ff"/><rect x="1257" y="223" width="7" height="4" fill="#0000ff"/><rect x="1270" y="225" width="1" height="22" fill="#ff0000"/><rect x="1267" y="228" width="7" height="9" fill="#ff0000"/><rect x="1280" y="236" width="1" height="25" fill="#ff0000"/><rect x="1277" y="237" width="7" height="4" fill="#ff0000"/><rect x="1290" y="222" width="1" height="37" fill="#ff0000"/><rect x="1287" y="241" width="7" height="17" fill="#ff0000"/><rect x="1300" y="253" width="1" height="31" fill="#ff0000"/><rect x="1297" y="257" width="7" height="26" fill="#ff0000"/><rect x="1310" y="269" width="1" height="29" fill="#ff0000"/><rect x="1307" y="282" width="7" height="11" fill="#ff0000"/><rect x="1320" y="267" width="1" height="20" fill="#ff0000"/><rect x="1320" y="293" width="1" height="6" fill="#ff0000"/><rect x="1317.5" y="287.5" width="6" height="5" fill="none" stroke="#ff0000" stroke-width="1"/><rect x="1330" y="228" width="1" height="2" fill="#0000ff"/><rect x="1330" y="286" width="1" height="7" fill="#0000ff"/><rect x="1327.5" y="230.5" width="6" height="55" fill="none" stroke="#0000ff" stroke-width="1"/><rect x="1340" y="205" width="1" height="6" fill="#0000ff"/><rect x="1340" y="231" width="1" height="2" fill="#0000ff"/><rect x="1337.5" y="211.5" width="6" height="19" fill="none" stroke="#0000ff" stroke-width="1"/><rect x="1350" y="212" width="1" height="35" fill="#0000ff"/><rect x="1347" y="212" width="7" height="19" fill="#0000ff"/><rect x="1360" y="202" width="1" height="1" fill="#0000ff"/><rect x="1360" y="231" width="1" height="14" fill="#0000ff"/><rect x="1357.5" y="203.5" width="6" height="27" fill="none" stroke="#0000ff" stroke-width="1"/><rect x="1370" y="200" width="1" height="38" fill="#0000ff"/><rect x="1367" y="207" width="7" height="23" fill="#0000ff"/><rect x="1380" y="215" width="1" height="118" fill="#ff0000"/><rect x="1377" y="219" width="7" height="75" fill="#ff0000"/><rect x="1390" y="291" width="1" height="6" fill="#ff0000"/><rect x="1390" y="316" width="1" height="17" fill="#ff0000"/><rect x="1387.5" y="297.5" width="6" height="18" fill="none" stroke="#ff0000" stroke-width="1"/><rect x="1400" y="283" width="1" height="50" fill="#ff0000"/><rect x="1397" y="295" width="7" height="21" fill="#ff0000"/><rect x="1410" y="300" width="1" height="3" fill="#ff0000"/><rect x="1410" y="316" width="1" height="17" fill="#ff0000"/><rect x="1407.5" y="303.5" width="6" height="12" fill="none" stroke="#ff0000" stroke-width="1"/><rect x="1420" y="263" width="1" height="70" fill="#ff0000"/><rect x="1417" y="302" width="7" height="1" fill="#ff0000"/><rect x="1430" y="278" width="1" height="22" fill="#ff0000"/><rect x="1430" y="305" width="1" height="28" fill="#ff0000"/><rect x="1427.5" y="300.5" width="6" height="4" fill="none" stroke="#ff0000" stroke-width="1"/><rect x="1440" y="246" width="1" height="1" fill="#0000ff"/><rect x="1437.5" y="247.5" width="6" height="85" fill="none" stroke="#0000ff" stroke-width="1"/><rect x="1450" y="237" width="1" height="96" fill="#0000ff"/><rect x="1447" y="253" width="7" height="34" fill="#0000ff"/><rect x="1460" y="254" width="1" height="79" fill="#ff0000"/><rect x="1457" y="290" width="7" height="43" fill="#ff0000"/><rect x="1470" y="276" width="1" height="10" fill="#0000ff"/><rect x="1467.5" y="286.5" width="6" height="46" fill="none" stroke="#0000ff" stroke-width="1"/><rect x="1480" y="223" width="1" height="1" fill="#0000ff"/><rect x="1480" y="285" width="1" height="1" fill="#0000ff"/><rect x="1477.5" y="224.5" width="6" height="60" fill="none" stroke="#0000ff" stroke-width="1"/><rect x="1490" y="216" width="1" height="46" fill="#0000ff"/><rect x="1487" y="224" width="7" height="13" fill="#0000ff"/><rect x="1500" y="208" width="1" height="5" fill="#0000ff"/><rect x="1500" y="239" width="1" height="16" fill="#0000ff"/><rect x="1497.5" y="213.5" width="6" height="25" fill="none" stroke="#0000ff" stroke-width="1"/><rect x="1510" y="212" width="1" height="46" fill="#0000ff"/><rect x="1507" y="212" width="7" height="19" fill="#0000ff"/><rect x="1520" y="212" width="1" height="43" fill="#0000ff"/><rect x="1517" y="228" width="7" height="3" fill="#0000ff"/><rect x="1530" y="221" width="1" height="48" fill="#ff0000"/><rect x="1527" y="228" width="7" height="41" fill="#ff0000"/><rect x="1540" y="270" width="1" height="63" fill="#ff0000"/><rect x="1537" y="270" width="7" height="63" fill="#ff0000"/><rect x="1550" y="232" width="1" height="16" fill="#0000ff"/><rect x="1550" y="293" width="1" height="3" fill="#0000ff"/><rect x="1547.5" y="248.5" width="6" height="44" fill="none" stroke="#0000ff" stroke-width="1"/><rect x="1560" y="232" width="1" height="8" fill="#0000ff"/><rect x="1560" y="245" width="1" height="16" fill="#0000ff"/><rect x="1557.5" y="240.5" width="6" height="4" fill="none" stroke="#0000ff" stroke-width="1"/><rect x="1570" y="239" width="1" height="41" fill="#ff0000"/><rect x="1567" y="241" width="7" height="32" fill="#ff0000"/><rect x="1580" y="250" width="1" height="5" fill="#ff0000"/><rect x="1580" y="272" width="1" height="12" fill="#ff0000"/><rect x="1577.5" y="255.5" width="6" height="16" fill="none" stroke="#ff0000" stroke-width="1"/><rect x="1590" y="248" width="1" height="17" fill="#ff0000"/><rect x="1587" y="256" width="7" height="2" fill="#ff0000"/><rect x="1600" y="225" width="1" height="2" fill="#0000ff"/><rect x="1600" y="242" width="1" height="5" fill="#0000ff"/><rect x="1597.5" y="227.5" width="6" height="14" fill="none" stroke="#0000ff" stroke-width="1"/><rect x="1610" y="214" width="1" height="5" fill="#0000ff"/><rect x="1610" y="227" width="1" height="7" fill="#0000ff"/><rect x="1607.5" y="219.5" width="6" height="7" fill="none" stroke="#0000ff" stroke-width="1"/><rect x="1620" y="193" width="1" height="3" fill="#0000ff"/><rect x="1620" y="222" width="1" height="3" fill="#0000ff"/><rect x="1617.5" y="196.5" width="6" height="25" fill="none" stroke="#0000ff" stroke-width="1"/><rect x="1630" y="181" width="1" height="8" fill="#0000ff"/><rect x="1630" y="198" width="1" height="5" fill="#0000ff"/><rect x="1627.5" y="189.5" width="6" height="8" fill="none" stroke="#0000ff" stroke-width="1"/><rect x="1640" y="161" width="1" height="2" fill="#0000ff"/><rect x="1640" y="187" width="1" height="12" fill="#0000ff"/><rect x="1637.5" y="163.5" width="6" height="23" fill="none" stroke="#0000ff" stroke-width="1"/><rect x="1650" y="147" width="1" height="8" fill="#0000ff"/><rect x="1650" y="164" width="1" height="5" fill="#0000ff"/><rect x="1647.5" y="155.5" width="6" height="8" fill="none" stroke="#0000ff" stroke-width="1"/><rect x="1660" y="134" width="1" height="7" fill="#0000ff"/><rect x="1660" y="151" width="1" height="6" fill="#0000ff"/><rect x="1657.5" y="141.5" width="6" height="9" fill="none" stroke="#0000ff" stroke-width="1"/><rect x="1670" y="131" width="1" height="3" fill="#0000ff"/><rect x="1670" y="137" width="1" height="10" fill="#0000ff"/><rect x="1667.5" y="134.5" width="6" height="2" fill="none" stroke="#0000ff" stroke-width="1"/><rect x="1680" y="116" width="1" height="2" fill="#0000ff"/><rect x="1680" y="133" width="1" height="10" fill="#0000ff"/><rect x="1677.5" y="118.5" width="6" height="14" fill="none" stroke="#0000ff" stroke-width="1"/><rect x="1690" y="115" width="1" height="1" fill="#0000ff"/><rect x="1690" y="119" width="1" height="26" fill="#0000ff"/><rect x="1687.5" y="116.5" width="6" height="2" fill="none" stroke="#0000ff" stroke-width="1"/><rect x="1700" y="88" width="1" height="4" fill="#0000ff"/><rect x="1700" y="116" width="1" height="6" fill="#0000ff"/><rect x="1697.5" y="92.5" width="6" height="23" fill="none" stroke="#0000ff" stroke-width="1"/></g>
<polyline points="10.5,982.0 20.5,973.6 30.5,965.2 40.5,957.5 50.5,950.6 60.5,945.3 70.5,942.2 80.5,935.9 90.5,929.0 100.5,925.0 110.5,924.0 120.5,927.5 130.5,929.8 140.5,929.0 150.5,923.4 160.5,913.3 170.5,898.2 180.5,881.1 190.5,866.4 200.5,855.8 210.5,849.7 220.5,848.0 230.5,851.6 240.5,854.3 250.5,854.3 260.5,851.8 270.5,849.7 280.5,849.7 290.5,851.6 300.5,856.0 310.5,859.5 320.5,858.5 330.5,854.3 340.5,849.1" fill="none" stroke="#ffffff" stroke-width="3.4" stroke-linejoin="round" stroke-linecap="butt"/>
<polyline points="340.5,849.1 350.5,843.4 360.5,836.5 370.5,832.3 380.5,832.3 390.5,833.8 400.5,832.3 410.5,834.8 420.5,839.6 430.5,843.2 440.5,845.5 450.5,847.6" fill="none" stroke="#ff0000" stroke-width="3.4" stroke-linejoin="round" stroke-linecap="butt"/>
<polyline points="450.5,847.6 460.5,854.3 470.5,860.6 480.5,862.7 490.5,864.8 500.5,867.5 510.5,867.5 520.5,867.5 530.5,866.4 540.5,862.0 550.5,858.1 560.5,851.8 570.5,850.1 580.5,855.8 590.5,870.0 600.5,889.9 610.5,906.6 620.5,916.4 630.5,920.6 640.5,917.1 650.5,904.5 660.5,890.9 670.5,876.3 680.5,862.7 690.5,850.1" fill="none" stroke="#ffffff" stroke-width="3.4" stroke-linejoin="round" stroke-linecap="butt"/>
<polyline points="690.5,850.1 700.5,841.7 710.5,834.8 720.5,833.8 730.5,848.0" fill="none" stroke="#ff0000" stroke-width="3.4" stroke-linejoin="round" stroke-linecap="butt"/>
<polyline points="730.5,848.0 740.5,865.8 750.5,887.8 760.5,909.8 770.5,926.5 780.5,940.1 790.5,941.8 800.5,940.7 810.5,942.8 820.5,943.9 830.5,944.9 840.5,942.8 850.5,938.6 860.5,932.8 870.5,929.6 880.5,927.5 890.5,928.6 900.5,927.5 910.5,924.4 920.5,916.0 930.5,903.5 940.5,890.9 950.5,876.3 960.5,861.6 970.5,848.6" fill="none" stroke="#ffffff" stroke-width="3.4" stroke-linejoin="round" stroke-linecap="butt"/>
<polyline points="970.5,848.6 980.5,838.6 990.5,830.2 1000.5,825.4 1010.5,825.4 1020.5,827.7 1030.5,828.8 1040.5,828.8 1050.5,830.9 1060.5,832.9 1070.5,834.8 1080.5,834.8 1090.5,833.4" fill="none" stroke="#ff0000" stroke-width="3.4" stroke-linejoin="round" stroke-linecap="butt"/>
<polyline points="1667.0,847.6 1670.5,843.5 1680.5,834.6 1690.5,826.8 1700.5,818.6" fill="none" stroke="#ff0000" stroke-width="3.4" stroke-linejoin="round" stroke-linecap="butt"/>
<polyline points="214,848.6 217,848 221.5,847.6" fill="none" stroke="#ff0000" stroke-width="1.6"/>
<g shape-rendering="crispEdges"><rect x="249" y="843" width="4" height="4" fill="#ffff00"/><rect x="259" y="840" width="4" height="4" fill="#ffff00"/><rect x="319" y="846" width="4" height="4" fill="#ffff00"/><rect x="329" y="843" width="4" height="4" fill="#ffff00"/><rect x="349" y="832" width="4" height="4" fill="#ffff00"/><rect x="359" y="824" width="4" height="4" fill="#ffff00"/><rect x="389" y="821" width="4" height="4" fill="#ffff00"/><rect x="399" y="821" width="4" height="4" fill="#ffff00"/><rect x="409" y="822" width="4" height="4" fill="#ffff00"/><rect x="439" y="834" width="4" height="4" fill="#ffff00"/><rect x="699" y="830" width="4" height="4" fill="#ffff00"/><rect x="709" y="823" width="4" height="4" fill="#ffff00"/><rect x="959" y="849" width="4" height="4" fill="#ffff00"/><rect x="989" y="818" width="4" height="4" fill="#ffff00"/><rect x="999" y="813" width="4" height="4" fill="#ffff00"/><rect x="1019" y="816" width="4" height="4" fill="#ffff00"/><rect x="1029" y="817" width="4" height="4" fill="#ffff00"/><rect x="1039" y="817" width="4" height="4" fill="#ffff00"/><rect x="1069" y="822" width="4" height="4" fill="#ffff00"/><rect x="1079" y="823" width="4" height="4" fill="#ffff00"/><rect x="1669" y="833" width="4" height="4" fill="#ffff00"/><rect x="1679" y="823" width="4" height="4" fill="#ffff00"/><rect x="1689" y="814" width="4" height="4" fill="#ffff00"/><rect x="1699" y="807" width="4" height="4" fill="#ffff00"/></g>
<path d="M360.5 812.5L365.7 817.7L360.5 822.9L355.3 817.7Z" fill="#ff0000" stroke="#000" stroke-width="0.8"/>
<path d="M400.5 808.3L405.7 813.5L400.5 818.7L395.3 813.5Z" fill="#ff0000" stroke="#000" stroke-width="0.8"/>
<path d="M990.5 806.6L995.7 811.8L990.5 817.0L985.3 811.8Z" fill="#ff0000" stroke="#000" stroke-width="0.8"/>
<path d="M1000.5 801.6L1005.7 806.8L1000.5 812.0L995.3 806.8Z" fill="#ff0000" stroke="#000" stroke-width="0.8"/>
<path d="M1030.5 804.1L1035.7 809.3L1030.5 814.5L1025.3 809.3Z" fill="#ff0000" stroke="#000" stroke-width="0.8"/>
<path d="M1680.6 811.4L1685.8 816.6L1680.6 821.8L1675.4 816.6Z" fill="#ff0000" stroke="#000" stroke-width="0.8"/>
<path d="M1700.4 795.3L1705.6 800.5L1700.4 805.7L1695.2 800.5Z" fill="#ff0000" stroke="#000" stroke-width="0.8"/>
<g shape-rendering="crispEdges"><rect x="0" y="776" width="1768" height="1" fill="#000"/><rect x="1707" y="49" width="1" height="947" fill="#000"/><rect x="1" y="995" width="1707" height="1" fill="#000"/><rect x="30" y="996" width="1" height="6" fill="#000"/><rect x="80" y="996" width="1" height="6" fill="#000"/><rect x="120" y="996" width="1" height="6" fill="#000"/><rect x="160" y="996" width="1" height="6" fill="#000"/><rect x="200" y="996" width="1" height="6" fill="#000"/><rect x="250" y="996" width="1" height="6" fill="#000"/><rect x="290" y="996" width="1" height="6" fill="#000"/><rect x="340" y="996" width="1" height="6" fill="#000"/><rect x="380" y="996" width="1" height="6" fill="#000"/><rect x="420" y="996" width="1" height="6" fill="#000"/><rect x="470" y="996" width="1" height="6" fill="#000"/><rect x="510" y="996" width="1" height="6" fill="#000"/><rect x="550" y="996" width="1" height="6" fill="#000"/><rect x="600" y="996" width="1" height="6" fill="#000"/><rect x="640" y="996" width="1" height="6" fill="#000"/><rect x="680" y="996" width="1" height="6" fill="#000"/><rect x="730" y="996" width="1" height="6" fill="#000"/><rect x="770" y="996" width="1" height="6" fill="#000"/><rect x="810" y="996" width="1" height="6" fill="#000"/><rect x="860" y="996" width="1" height="6" fill="#000"/><rect x="900" y="996" width="1" height="6" fill="#000"/><rect x="940" y="996" width="1" height="6" fill="#000"/><rect x="990" y="996" width="1" height="6" fill="#000"/><rect x="1030" y="996" width="1" height="6" fill="#000"/><rect x="1080" y="996" width="1" height="6" fill="#000"/><rect x="1120" y="996" width="1" height="6" fill="#000"/><rect x="1160" y="996" width="1" height="6" fill="#000"/><rect x="1200" y="996" width="1" height="6" fill="#000"/><rect x="1250" y="996" width="1" height="6" fill="#000"/><rect x="1290" y="996" width="1" height="6" fill="#000"/><rect x="1330" y="996" width="1" height="6" fill="#000"/><rect x="1380" y="996" width="1" height="6" fill="#000"/><rect x="1420" y="996" width="1" height="6" fill="#000"/><rect x="1470" y="996" width="1" height="6" fill="#000"/><rect x="1510" y="996" width="1" height="6" fill="#000"/><rect x="1550" y="996" width="1" height="6" fill="#000"/><rect x="1600" y="996" width="1" height="6" fill="#000"/><rect x="1640" y="996" width="1" height="6" fill="#000"/><rect x="1680" y="996" width="1" height="6" fill="#000"/><rect x="1708" y="59" width="6" height="1" fill="#000"/><rect x="1708" y="97" width="6" height="1" fill="#000"/><rect x="1708" y="134" width="6" height="1" fill="#000"/><rect x="1708" y="172" width="6" height="1" fill="#000"/><rect x="1708" y="210" width="6" height="1" fill="#000"/><rect x="1708" y="247" width="6" height="1" fill="#000"/><rect x="1708" y="285" width="6" height="1" fill="#000"/><rect x="1708" y="322" width="6" height="1" fill="#000"/><rect x="1708" y="360" width="6" height="1" fill="#000"/><rect x="1708" y="397" width="6" height="1" fill="#000"/><rect x="1708" y="435" width="6" height="1" fill="#000"/><rect x="1708" y="472" width="6" height="1" fill="#000"/><rect x="1708" y="510" width="6" height="1" fill="#000"/><rect x="1708" y="548" width="6" height="1" fill="#000"/><rect x="1708" y="585" width="6" height="1" fill="#000"/><rect x="1708" y="623" width="6" height="1" fill="#000"/><rect x="1708" y="660" width="6" height="1" fill="#000"/><rect x="1708" y="698" width="6" height="1" fill="#000"/><rect x="1708" y="735" width="6" height="1" fill="#000"/><rect x="1708" y="802" width="6" height="1" fill="#000"/><rect x="1708" y="840" width="6" height="1" fill="#000"/><rect x="1708" y="878" width="6" height="1" fill="#000"/><rect x="1708" y="915" width="6" height="1" fill="#000"/><rect x="1708" y="953" width="6" height="1" fill="#000"/><rect x="1708" y="991" width="6" height="1" fill="#000"/></g>
<g font-family="Liberation Sans, sans-serif" font-size="10.7px" fill="#000"><text x="1714.7" y="63.5">2800.00</text><text x="1714.7" y="101.5">2700.00</text><text x="1714.7" y="138.5">2600.00</text><text x="1714.7" y="176.5">2500.00</text><text x="1714.7" y="214.5">2400.00</text><text x="1714.7" y="251.5">2300.00</text><text x="1714.7" y="289.5">2200.00</text><text x="1714.7" y="326.5">2100.00</text><text x="1714.7" y="364.5">2000.00</text><text x="1714.7" y="401.5">1900.00</text><text x="1714.7" y="439.5">1800.00</text><text x="1714.7" y="476.5">1700.00</text><text x="1714.7" y="514.5">1600.00</text><text x="1714.7" y="552.5">1500.00</text><text x="1714.7" y="589.5">1400.00</text><text x="1714.7" y="627.5">1300.00</text><text x="1714.7" y="664.5">1200.00</text><text x="1714.7" y="702.5">1100.00</text><text x="1714.7" y="739.5">1000.00</text><text x="1714.8" y="806.5">60</text><text x="1714.8" y="844.5">40</text><text x="1714.8" y="882.5">20</text><text x="1714.8" y="919.5">0</text><text x="1714.8" y="957.5">-20</text><text x="1714.8" y="995.5">-40</text><text x="29.7" y="1012" text-anchor="middle">09</text><text x="79.7" y="1012" text-anchor="middle">F</text><text x="119.7" y="1012" text-anchor="middle">M</text><text x="159.7" y="1012" text-anchor="middle">A</text><text x="199.7" y="1012" text-anchor="middle">M</text><text x="249.7" y="1012" text-anchor="middle">J</text><text x="289.7" y="1012" text-anchor="middle">J</text><text x="339.7" y="1012" text-anchor="middle">A</text><text x="379.7" y="1012" text-anchor="middle">S</text><text x="419.7" y="1012" text-anchor="middle">O</text><text x="469.7" y="1012" text-anchor="middle">N</text><text x="509.7" y="1012" text-anchor="middle">D</text><text x="549.7" y="1012" text-anchor="middle">10</text><text x="599.7" y="1012" text-anchor="middle">F</text><text x="639.7" y="1012" text-anchor="middle">M</text><text x="679.7" y="1012" text-anchor="middle">A</text><text x="729.7" y="1012" text-anchor="middle">M</text><text x="769.7" y="1012" text-anchor="middle">J</text><text x="809.7" y="1012" text-anchor="middle">J</text><text x="859.7" y="1012" text-anchor="middle">A</text><text x="899.7" y="1012" text-anchor="middle">S</text><text x="939.7" y="1012" text-anchor="middle">O</text><text x="989.7" y="1012" text-anchor="middle">N</text><text x="1029.7" y="1012" text-anchor="middle">D</text><text x="1079.7" y="1012" text-anchor="middle">11</text><text x="1119.7" y="1012" text-anchor="middle">F</text><text x="1159.7" y="1012" text-anchor="middle">M</text><text x="1199.7" y="1012" text-anchor="middle">A</text><text x="1249.7" y="1012" text-anchor="middle">M</text><text x="1289.7" y="1012" text-anchor="middle">J</text><text x="1329.7" y="1012" text-anchor="middle">J</text><text x="1379.7" y="1012" text-anchor="middle">A</text><text x="1419.7" y="1012" text-anchor="middle">S</text><text x="1469.7" y="1012" text-anchor="middle">O</text><text x="1509.7" y="1012" text-anchor="middle">N</text><text x="1549.7" y="1012" text-anchor="middle">D</text><text x="1599.7" y="1012" text-anchor="middle">12</text><text x="1639.7" y="1012" text-anchor="middle">F</text><text x="1679.7" y="1012" text-anchor="middle">M</text><text x="2" y="60">PBF_PB_Direction(NQ 03-12 (Weekly),21), PBF_PB_Entry(NQ 03-12 (Weekly),9)</text><text x="2" y="798">PBF_OSOB(NQ 03-12 (Weekly))</text><text x="2" y="993">© 2012 NinjaTrader, LLC</text></g>
<path d="M1708.5 92.0L1714 85.5L1756.5 85.5L1756.5 98.5L1714 98.5Z" fill="#000" stroke="#000" stroke-width="1"/><text x="1715" y="96.0" font-family="Liberation Sans, sans-serif" font-size="11px" fill="#fff">2713.00</text>
<path d="M1708.5 145.0L1714 138.5L1756.5 138.5L1756.5 151.5L1714 151.5Z" fill="#0000ff" stroke="#000" stroke-width="1"/><text x="1715" y="149.0" font-family="Liberation Sans, sans-serif" font-size="11px" fill="#fff">2572.34</text>
<path d="M1708.5 818.0L1714 811.5L1744.5 811.5L1744.5 824.5L1714 824.5Z" fill="#00f000" stroke="#000" stroke-width="1"/><text x="1715" y="822.0" font-family="Liberation Sans, sans-serif" font-size="11px" fill="#000">51.47</text>
<path d="M1708.5 809.0L1714 802.5L1744.5 802.5L1744.5 815.5L1714 815.5Z" fill="#ffff00" stroke="#000" stroke-width="1"/><text x="1715" y="813.0" font-family="Liberation Sans, sans-serif" font-size="11px" fill="#000">56.47</text></svg>
<div id="scroll" class="abs">
<div class="abs chk" style="left:16px;top:0;width:469px;height:24px"></div>
<div class="abs sb3d" style="left:0;top:0;width:16px;height:24px"><svg class="abs" style="left:3px;top:6px" width="6" height="9"><path d="M5 0.500L1 4.500L5 8.500Z" fill="#000"/></svg></div>
<div class="abs sb3d" style="left:485px;top:0;width:1266px;height:24px"></div>
<div class="abs sb3d" style="left:1751px;top:0;width:16px;height:24px"><svg class="abs" style="left:5px;top:6px" width="6" height="9"><path d="M1 0.500L5 4.500L1 8.500Z" fill="#000"/></svg></div>
</div>
<div id="taskbar" class="abs">
<div class="tb" style="left:2px;width:53px;font-weight:bold;padding-left:19px;font-size:11.800px"><svg class="abs" style="left:3px;top:3px" width="15" height="14" viewBox="0 0 15 14"><path d="M1.500 2.500Q4 1 7 2.500L6 6.500Q3.500 5 0.500 6.500Z" fill="#e8401c"/><path d="M8 2.800Q11 4 14 2.500L13 6.500Q10 8 7 6.800Z" fill="#38b030"/><path d="M0.300 7.500Q2.800 6 5.800 7.500L4.800 11.500Q2.300 10 -0.700 11.500Z" fill="#3068e0"/><path d="M6.800 7.800Q9.800 9 12.800 7.500L11.800 11.500Q8.800 13 5.800 11.800Z" fill="#f4c818"/></svg>Start</div>
<div class="tb" style="left:59px;width:160px"><svg class="abs" style="left:4px;top:2px" width="16" height="16" viewBox="0 0 16 16"><path d="M0.500 0.500H13L15.500 3V15.500H0.500Z" fill="#2040c0" stroke="#102070"/><rect x="3" y="1" width="8" height="5" fill="#e8e8f8"/><rect x="8" y="1.500" width="2" height="3.500" fill="#2040c0"/><rect x="2.500" y="8.500" width="11" height="7" fill="#fff" stroke="#a02020"/><path d="M3 10.500H13M3 12.500H13" stroke="#e03030" stroke-width="1.300"/></svg>Total Commander 7.03 - ...</div>
<div class="tb" style="left:222px;width:160px"><svg class="abs" style="left:5px;top:6px" width="15" height="11" viewBox="0 0 15 11"><path d="M1 6.500Q2 1 4.200 1Q5.500 3.500 7.300 9.800" stroke="#a89080" stroke-width="1.900" fill="none" stroke-linecap="round"/><path d="M7 1L9.700 9.800Q13.700 6.500 13.500 3" stroke="#cc2020" stroke-width="1.900" fill="none" stroke-linecap="round" stroke-linejoin="round"/></svg>Control Center - Untitled1</div>
<div class="tb" style="left:385px;width:160px"><svg class="abs" style="left:4px;top:2px" width="15" height="15" viewBox="0 0 14 14"><rect x="0.500" y="0.500" width="13" height="13" fill="#fff" stroke="#6a6a9a"/><path d="M0 5H14M0 9H14M5 0V14M9 0V14" stroke="#c0c0d8" stroke-width="1"/><path d="M1 11L5 6L8 8L13 2" stroke="#1060c0" stroke-width="1.600" fill="none"/><path d="M1 9L4 9L8 4L13 5" stroke="#20a020" stroke-width="1.200" fill="none"/></svg>NQ 03-12 (Weekly)  Wee...</div>
<div class="tb act" style="left:548px;width:160px;font-size:11.500px;letter-spacing:0.250px"><svg class="abs" style="left:5px;top:6px" width="15" height="11" viewBox="0 0 15 11"><path d="M1 6.500Q2 1 4.200 1Q5.500 3.500 7.300 9.800" stroke="#a89080" stroke-width="1.900" fill="none" stroke-linecap="round"/><path d="M7 1L9.700 9.800Q13.700 6.500 13.500 3" stroke="#cc2020" stroke-width="1.900" fill="none" stroke-linecap="round" stroke-linejoin="round"/></svg>Indicators</div>
<div class="tb" style="left:711px;width:160px;font-size:10.700px"><svg class="abs" style="left:5px;top:6px" width="15" height="11" viewBox="0 0 15 11"><path d="M1 6.500Q2 1 4.200 1Q5.500 3.500 7.300 9.800" stroke="#a89080" stroke-width="1.900" fill="none" stroke-linecap="round"/><path d="M7 1L9.700 9.800Q13.700 6.500 13.500 3" stroke="#cc2020" stroke-width="1.900" fill="none" stroke-linecap="round" stroke-linejoin="round"/></svg>NinjaTrader 7 lic.emu v5.06</div>
<div class="abs" style="left:1659px;top:6px;width:16px;height:16px;background:#08246b;color:#fff;font:10.5px 'Liberation Sans',sans-serif;line-height:16px;text-align:center">EN</div>
<div class="abs" style="left:1679px;top:2px;width:2px;height:22px;border-left:1px solid #848284;border-right:1px solid #fff"></div>
<div class="abs" style="left:1685px;top:1px;width:81px;height:23px;border:1px solid;border-color:#848284 #fff #fff #848284;font:10.6px 'Liberation Sans',sans-serif;line-height:25px;padding-left:29px">2:37 PM
<svg class="abs" style="left:3px;top:5px" width="16" height="16" viewBox="0 0 16 16"><circle cx="6" cy="6" r="4.500" fill="#909090" stroke="#505050"/><circle cx="6" cy="6" r="2" fill="#c8c8c8"/><path d="M9 10Q11 11 13 8.500M10 13Q13 13.500 15 10.500" stroke="#5060d0" fill="none"/></svg></div>
</div>
<div class="abs" id="dlg" style="left:1088px;top:307px;width:578px;height:675px;background:#d6d3ce;border:1px solid;border-color:#d6d3ce #424142 #424142 #d6d3ce;box-shadow:inset 1px 1px 0 #fff, inset -1px -1px 0 #848284"></div>
<div class="abs" style="left:1092px;top:311px;width:570px;height:15px;background:#08246b"></div>
<div class="abs" style="left:1094px;top:312px;font:bold 11.5px 'DejaVu Sans Condensed','DejaVu Sans',sans-serif;color:#fff;line-height:15px">Indicators</div>
<div class="abs" style="left:1650px;top:313px;width:10px;height:11px;background:#d6d3ce;border:1px solid;border-color:#fff #424142 #424142 #fff"><svg class="abs" style="left:1px;top:1px" width="7" height="7" viewBox="0 0 7 7"><path d="M0.500 0.500L6.500 6.500M6.500 0.500L0.500 6.500" stroke="#000" stroke-width="1.100"/></svg></div>
<div class="abs" style="left:1092px;top:327px;width:570px;height:586px;border:1px solid;border-color:#848284 #fff #fff #848284;box-shadow:inset 1px 1px 0 #424142"></div>
<div class="abs" style="left:1094px;top:329px;width:275px;height:342px;background:#fff;border:1px solid;border-color:#848284 #fff #fff #848284;box-shadow:inset 1px 1px 0 #424142, inset -1px -1px 0 #d6d3ce"></div>
<div class="abs lst" style="left:1098px;top:332px"><div>MFI</div><div>MIN</div><div>Momentum</div><div>NBarsDown</div><div>NBarsUp</div><div>OBV</div><div>ParabolicSAR</div><div>PBF<span class="u">_</span>2EMA<span class="u">_</span>Color</div><div>PBF<span class="u">_</span>B<span class="u">_</span>S<span class="u">_</span>Pressure</div><div>PBF<span class="u">_</span>CCI</div><div>PBF<span class="u">_</span>DMI<span class="u">_</span>ADX</div><div>PBF<span class="u">_</span>Fast<span class="u">_</span>3MAs</div><div>PBF<span class="u">_</span>Function<span class="u">_</span>NLR</div><div>PBF<span class="u">_</span>HeatMeter</div><div>PBF<span class="u">_</span>iTunnel</div><div>PBF<span class="u">_</span>Momentum</div><div>PBF<span class="u">_</span>OSOB</div><div>PBF<span class="u">_</span>PB<span class="u">_</span>Direction</div><div>PBF<span class="u">_</span>PB<span class="u">_</span>Entry</div><div>PBF<span class="u">_</span>RSI</div><div>PBF<span class="u">_</span>Scalper<span class="u">_</span>Show<span class="u">_</span>Me</div><div>PBF<span class="u">_</span>Show<span class="u">_</span>Me<span class="u">_</span>Dots</div><div>PBF<span class="u">_</span>Squeeze</div><div>PBF<span class="u">_</span>Trend<span class="u">_</span>Bars<span class="u">_</span>v2</div><div>PFE</div><div>Pivots</div></div>
<div class="abs chk" style="left:1351px;top:331px;width:16px;height:338px"></div>
<div class="abs sb3d" style="left:1351px;top:331px;width:16px;height:16px"><svg class="abs" style="left:3px;top:5px" width="7" height="4"><path d="M0 4L3.500 0.500L7 4Z" fill="#000"/></svg></div>
<div class="abs sb3d" style="left:1351px;top:653px;width:16px;height:16px"><svg class="abs" style="left:3px;top:5px" width="7" height="4"><path d="M0 0L3.500 3.500L7 0Z" fill="#000"/></svg></div>
<div class="abs sb3d" style="left:1351px;top:473px;width:16px;height:66px"></div>
<div class="abs" style="left:1094px;top:675px;width:275px;height:198px;background:#fff;border:1px solid;border-color:#848284 #fff #fff #848284;box-shadow:inset 1px 1px 0 #424142, inset -1px -1px 0 #d6d3ce"></div>
<div class="abs" style="left:1096px;top:703px;width:271px;height:13px;background:#08246b"></div>
<div class="abs lst" style="left:1098px;top:678px"><div>PBF<span class="u">_</span>OSOB(NQ 03-12 (Weekly))</div><div>PBF<span class="u">_</span>PB<span class="u">_</span>Direction(NQ 03-12 (Weekly),21)</div><div style="color:#fff">PBF<span class="u">_</span>PB<span class="u">_</span>Entry(NQ 03-12 (Weekly),9)</div></div>
<div class="abs" style="left:1377px;top:328px;width:283px;height:521px;background:#fff;border:1px solid #848284;border-top-color:#424142"></div>
<div class="abs" style="left:1378px;top:329px;width:281px;height:2px;background:#d6d3ce"></div>
<div class="abs" style="left:1378px;top:329px;width:14px;height:322px;background:#d6d3ce"></div>
<div class="abs" style="left:1378px;top:331px;width:281px;height:16px;background:#d6d3ce"></div>
<svg class="abs" style="left:1380px;top:334px" width="9" height="9" viewBox="0 0 9 9"><rect x="0.500" y="0.500" width="8" height="8" fill="#fff" stroke="#000"/><path d="M2 4.500H7" stroke="#000"/></svg>
<div class="abs pg b" style="left:1395px;top:331px">Parameters</div>
<div class="abs" style="left:1392px;top:347px;width:120px;height:16px;background:#fff;border-bottom:1px solid #d6d3ce;border-right:1px solid #d6d3ce;overflow:hidden"><div class="pg" style="margin-left:3px">Period</div></div>
<div class="abs" style="left:1512px;top:347px;width:147px;height:16px;border-bottom:1px solid #d6d3ce"></div>
<div class="abs pg b" style="left:1516px;top:347px">9</div>
<div class="abs" style="left:1378px;top:363px;width:281px;height:16px;background:#d6d3ce"></div>
<svg class="abs" style="left:1380px;top:366px" width="9" height="9" viewBox="0 0 9 9"><rect x="0.500" y="0.500" width="8" height="8" fill="#fff" stroke="#000"/><path d="M2 4.500H7" stroke="#000"/></svg>
<div class="abs pg b" style="left:1395px;top:363px">Data</div>
<div class="abs" style="left:1392px;top:379px;width:120px;height:16px;background:#fff;border-bottom:1px solid #d6d3ce;border-right:1px solid #d6d3ce;overflow:hidden"><div class="pg" style="margin-left:3px">Calculate on bar close</div></div>
<div class="abs" style="left:1512px;top:379px;width:147px;height:16px;border-bottom:1px solid #d6d3ce"></div>
<div class="abs pg b" style="left:1516px;top:379px">False</div>
<div class="abs" style="left:1392px;top:395px;width:120px;height:16px;background:#fff;border-bottom:1px solid #d6d3ce;border-right:1px solid #d6d3ce;overflow:hidden"><div class="pg" style="margin-left:3px">Input series</div></div>
<div class="abs" style="left:1512px;top:395px;width:147px;height:16px;border-bottom:1px solid #d6d3ce"></div>
<div class="abs pg b" style="left:1516px;top:395px">NQ 03-12 (Weekly)</div>
<div class="abs" style="left:1392px;top:411px;width:120px;height:16px;background:#fff;border-bottom:1px solid #d6d3ce;border-right:1px solid #d6d3ce;overflow:hidden"><div class="pg" style="margin-left:3px">Maximum bars look back</div></div>
<div class="abs" style="left:1512px;top:411px;width:147px;height:16px;border-bottom:1px solid #d6d3ce"></div>
<div class="abs pg b" style="left:1516px;top:411px">TwoHundredFiftySix</div>
<div class="abs" style="left:1378px;top:427px;width:281px;height:16px;background:#d6d3ce"></div>
<svg class="abs" style="left:1380px;top:430px" width="9" height="9" viewBox="0 0 9 9"><rect x="0.500" y="0.500" width="8" height="8" fill="#fff" stroke="#000"/><path d="M2 4.500H7" stroke="#000"/></svg>
<div class="abs pg b" style="left:1395px;top:427px">Visual</div>
<div class="abs" style="left:1392px;top:443px;width:120px;height:16px;background:#fff;border-bottom:1px solid #d6d3ce;border-right:1px solid #d6d3ce;overflow:hidden"><div class="pg" style="margin-left:3px">Auto scale</div></div>
<div class="abs" style="left:1512px;top:443px;width:147px;height:16px;border-bottom:1px solid #d6d3ce"></div>
<div class="abs pg b" style="left:1516px;top:443px">True</div>
<div class="abs" style="left:1392px;top:459px;width:120px;height:16px;background:#fff;border-bottom:1px solid #d6d3ce;border-right:1px solid #d6d3ce;overflow:hidden"><div class="pg" style="margin-left:3px">Displacement</div></div>
<div class="abs" style="left:1512px;top:459px;width:147px;height:16px;border-bottom:1px solid #d6d3ce"></div>
<div class="abs pg b" style="left:1516px;top:459px">0</div>
<div class="abs" style="left:1392px;top:475px;width:120px;height:16px;background:#fff;border-bottom:1px solid #d6d3ce;border-right:1px solid #d6d3ce;overflow:hidden"><div class="pg" style="margin-left:3px">Display in Data Box</div></div>
<div class="abs" style="left:1512px;top:475px;width:147px;height:16px;border-bottom:1px solid #d6d3ce"></div>
<div class="abs pg b" style="left:1516px;top:475px">True</div>
<div class="abs" style="left:1392px;top:491px;width:120px;height:16px;background:#d6d3ce;border-bottom:1px solid #d6d3ce;border-right:1px solid #d6d3ce;overflow:hidden"><div class="pg" style="margin-left:3px">Label</div></div>
<div class="abs" style="left:1512px;top:491px;width:147px;height:16px;border-bottom:1px solid #d6d3ce"></div>
<div class="abs pg b" style="left:1516px;top:491px">PBF<span class="u">_</span>PB<span class="u">_</span>Entry</div>
<div class="abs" style="left:1392px;top:507px;width:120px;height:16px;background:#fff;border-bottom:1px solid #d6d3ce;border-right:1px solid #d6d3ce;overflow:hidden"><div class="pg" style="margin-left:3px">Panel</div></div>
<div class="abs" style="left:1512px;top:507px;width:147px;height:16px;border-bottom:1px solid #d6d3ce"></div>
<div class="abs pg b" style="left:1516px;top:507px">Same as input series</div>
<div class="abs" style="left:1392px;top:523px;width:120px;height:16px;background:#fff;border-bottom:1px solid #d6d3ce;border-right:1px solid #d6d3ce;overflow:hidden"><div class="pg" style="margin-left:3px">Price marker(s)</div></div>
<div class="abs" style="left:1512px;top:523px;width:147px;height:16px;border-bottom:1px solid #d6d3ce"></div>
<div class="abs pg b" style="left:1516px;top:523px">True</div>
<div class="abs" style="left:1392px;top:539px;width:120px;height:16px;background:#fff;border-bottom:1px solid #d6d3ce;border-right:1px solid #d6d3ce;overflow:hidden"><div class="pg" style="margin-left:3px">Scale justification</div></div>
<div class="abs" style="left:1512px;top:539px;width:147px;height:16px;border-bottom:1px solid #d6d3ce"></div>
<div class="abs pg b" style="left:1516px;top:539px">Right</div>
<div class="abs" style="left:1378px;top:555px;width:281px;height:16px;background:#d6d3ce"></div>
<svg class="abs" style="left:1380px;top:558px" width="9" height="9" viewBox="0 0 9 9"><rect x="0.500" y="0.500" width="8" height="8" fill="#fff" stroke="#000"/><path d="M2 4.500H7" stroke="#000"/></svg>
<div class="abs pg b" style="left:1395px;top:555px">Plots</div>
<div class="abs" style="left:1392px;top:571px;width:120px;height:16px;background:#fff;border-bottom:1px solid #d6d3ce;border-right:1px solid #d6d3ce;overflow:hidden"><div class="pg" style="margin-left:3px">DnBar</div></div>
<div class="abs" style="left:1512px;top:571px;width:147px;height:16px;border-bottom:1px solid #d6d3ce"></div>
<svg class="abs" style="left:1380px;top:574px" width="9" height="9" viewBox="0 0 9 9"><rect x="0.500" y="0.500" width="8" height="8" fill="#fff" stroke="#000"/><path d="M2 4.500H7M4.500 2V7" stroke="#000"/></svg>
<svg class="abs" style="left:1514px;top:572px" width="20" height="13" viewBox="0 0 20 13"><rect x="0.500" y="0.500" width="19" height="12" fill="#fff" stroke="#000"/><path d="M1.500 11.500L5.500 4.500L11 7.500L18.500 1" stroke="#ff0000" stroke-width="2" fill="none"/></svg>
<div class="abs pg b" style="left:1542px;top:571px">Line; Solid; 2px</div>
<div class="abs" style="left:1392px;top:587px;width:120px;height:16px;background:#fff;border-bottom:1px solid #d6d3ce;border-right:1px solid #d6d3ce;overflow:hidden"><div class="pg" style="margin-left:3px">Neutral</div></div>
<div class="abs" style="left:1512px;top:587px;width:147px;height:16px;border-bottom:1px solid #d6d3ce"></div>
<svg class="abs" style="left:1380px;top:590px" width="9" height="9" viewBox="0 0 9 9"><rect x="0.500" y="0.500" width="8" height="8" fill="#fff" stroke="#000"/><path d="M2 4.500H7M4.500 2V7" stroke="#000"/></svg>
<svg class="abs" style="left:1514px;top:588px" width="20" height="13" viewBox="0 0 20 13"><rect x="0.500" y="0.500" width="19" height="12" fill="#fff" stroke="#000"/><path d="M1.500 11.500L5.500 4.500L11 7.500L18.500 1" stroke="#ffff00" stroke-width="2" fill="none"/></svg>
<div class="abs pg b" style="left:1542px;top:587px">Line; Solid; 1px</div>
<div class="abs" style="left:1392px;top:603px;width:120px;height:16px;background:#fff;border-bottom:1px solid #d6d3ce;border-right:1px solid #d6d3ce;overflow:hidden"><div class="pg" style="margin-left:3px">UpBar</div></div>
<div class="abs" style="left:1512px;top:603px;width:147px;height:16px;border-bottom:1px solid #d6d3ce"></div>
<svg class="abs" style="left:1380px;top:606px" width="9" height="9" viewBox="0 0 9 9"><rect x="0.500" y="0.500" width="8" height="8" fill="#fff" stroke="#000"/><path d="M2 4.500H7M4.500 2V7" stroke="#000"/></svg>
<svg class="abs" style="left:1514px;top:604px" width="20" height="13" viewBox="0 0 20 13"><rect x="0.500" y="0.500" width="19" height="12" fill="#fff" stroke="#000"/><path d="M1.500 11.500L5.500 4.500L11 7.500L18.500 1" stroke="#0000ff" stroke-width="2" fill="none"/></svg>
<div class="abs pg b" style="left:1542px;top:603px">Line; Solid; 2px</div>
<div class="abs" style="left:1378px;top:619px;width:281px;height:16px;background:#d6d3ce"></div>
<svg class="abs" style="left:1380px;top:622px" width="9" height="9" viewBox="0 0 9 9"><rect x="0.500" y="0.500" width="8" height="8" fill="#fff" stroke="#000"/><path d="M2 4.500H7" stroke="#000"/></svg>
<div class="abs pg b" style="left:1395px;top:619px">Visual</div>
<div class="abs" style="left:1392px;top:635px;width:120px;height:16px;background:#fff;border-bottom:1px solid #d6d3ce;border-right:1px solid #d6d3ce;overflow:hidden"><div class="pg" style="margin-left:3px">HollowBarMode</div></div>
<div class="abs" style="left:1512px;top:635px;width:147px;height:16px;border-bottom:1px solid #d6d3ce"></div>
<div class="abs pg b" style="left:1516px;top:635px">True</div>
<div class="abs" style="left:1377px;top:852px;width:283px;height:59px;border:1px solid #848284"></div>
<div class="abs pg b" style="left:1382px;top:854px">Label</div>
<div class="abs btn3d" style="left:1118px;top:880px;width:68px;height:25px;text-align:center;line-height:23px;font:11px 'Liberation Sans',sans-serif;line-height:23px;color:#848284;text-shadow:1px 1px 0 #fff"><span style="display:inline-block;font-size:12.4px;transform:scaleX(0.865)">New</span></div>
<div class="abs btn3d" style="left:1275px;top:880px;width:68px;height:25px;text-align:center;line-height:23px;font:11px 'Liberation Sans',sans-serif;line-height:23px;color:#000"><span style="display:inline-block;font-size:12.4px;transform:scaleX(0.865)">Remove</span></div>
<div class="abs btn3d" style="left:1180px;top:941px;width:81px;height:25px;text-align:center;line-height:23px;font:11px 'Liberation Sans',sans-serif;line-height:23px;color:#000"><span style="display:inline-block;font-size:12.4px;transform:scaleX(0.865)">OK</span></div>
<div class="abs" style="left:1337px;top:941px;width:80px;height:25px;border:1px solid #000"></div>
<div class="abs btn3d" style="left:1338px;top:942px;width:78px;height:23px;text-align:center;line-height:21px;font:11px 'Liberation Sans',sans-serif;line-height:21px;color:#000"><span style="display:inline-block;font-size:12.4px;transform:scaleX(0.865)">Apply</span></div>
<div class="abs btn3d" style="left:1494px;top:941px;width:80px;height:25px;text-align:center;line-height:23px;font:11px 'Liberation Sans',sans-serif;line-height:23px;color:#000"><span style="display:inline-block;font-size:12.4px;transform:scaleX(0.865)">Close</span></div>
<svg class="abs" style="left:1648px;top:964px" width="14" height="14" viewBox="0 0 14 14"><path d="M13 1L1 13M13 5L5 13M13 9L9 13" stroke="#848284" stroke-width="1.400"/><path d="M13 2L2 13M13 6L6 13M13 10L10 13" stroke="#fff" stroke-width="0.800" transform="translate(-1.500,-1.500)"/></svg>
<div class="abs" style="left:1098px;top:707px;width:432px;height:161px;background:rgba(255,255,255,0.5);border:1px solid rgba(110,110,110,0.75)"></div>
<div class="abs wm" style="left:1098px;top:730px;width:427px;letter-spacing:0.150px">www.trading-software-collection.com</div>
<div class="abs wm" style="left:1098px;top:776px;width:426px">andreybbrv@gmail.com</div>
<div class="abs wm" style="left:1098px;top:822px;width:430px">skype: andreybbrv</div>
</body></html>
